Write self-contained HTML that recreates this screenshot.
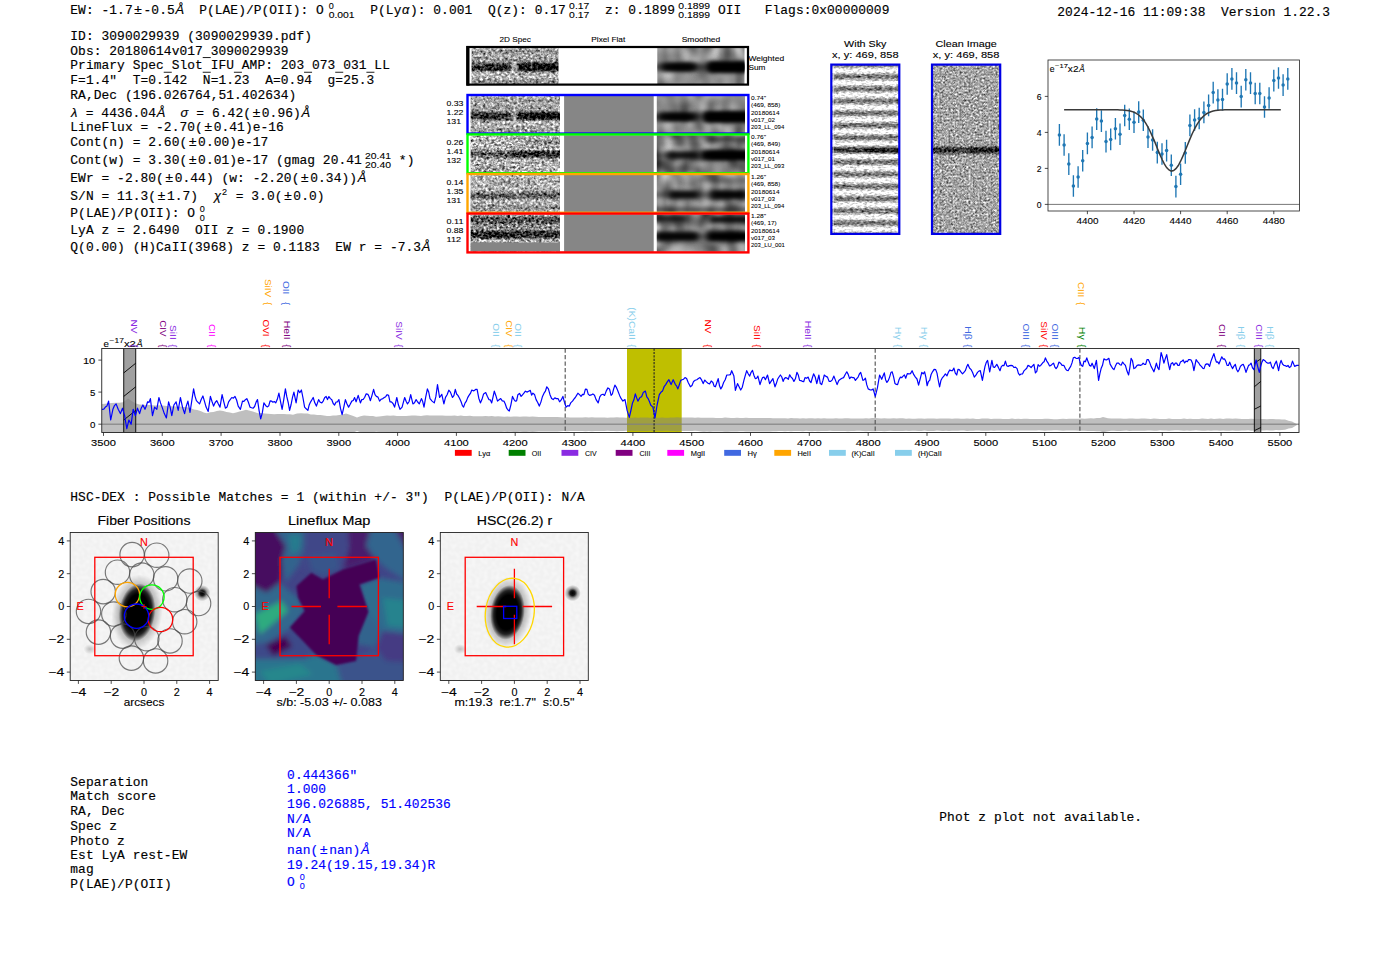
<!DOCTYPE html>
<html><head><meta charset="utf-8"><title>3090029939</title>
<style>
html,body{margin:0;padding:0;background:#fff;}
body{width:1400px;height:953px;overflow:hidden;}
svg{display:block}
text{white-space:pre}
.m{font-family:"Liberation Mono",monospace;font-size:12.9px;fill:#000;stroke:#000;stroke-width:0.16px}
.mi{font-family:"Liberation Sans",sans-serif;font-style:italic;font-size:12.9px;fill:#000;stroke:#000;stroke-width:0.16px}
.ss{font-family:"Liberation Sans",sans-serif;font-size:9.0px;fill:#000;stroke-width:0.15px}
.b{fill:#00f;stroke:#00f}
.s{font-family:"Liberation Sans",sans-serif}
</style></head>
<body>
<svg width="1400" height="953" viewBox="0 0 1400 953">
<rect width="1400" height="953" fill="#fff"/>
<!-- part_text -->
<text x="70.30" y="14.3" class="m"  textLength="62.36" lengthAdjust="spacing">EW: -1.7</text><text x="138.09" y="14.3" class="m" text-anchor="middle" style="font-family:'Liberation Sans',sans-serif;font-size:13.6px">±</text><text x="143.51" y="14.3" class="m"  textLength="31.18" lengthAdjust="spacing">-0.5</text><text x="179.72" y="14.3" class="mi" text-anchor="middle">Å</text><text x="199.14" y="14.3" class="m"  textLength="124.72" lengthAdjust="spacing">P(LAE)/P(OII): O</text><text x="328.66" y="8.7" class="s" font-size="9.07" stroke="#000" stroke-width="0.109" >0</text><text x="328.66" y="17.5" class="s" font-size="9.07" stroke="#000" stroke-width="0.109" textLength="25.97" lengthAdjust="spacingAndGlyphs" >0.001</text><text x="370.22" y="14.3" class="m"  textLength="31.18" lengthAdjust="spacing">P(Ly</text><text x="405.66" y="14.3" class="mi" text-anchor="middle">α</text><text x="409.93" y="14.3" class="m"  textLength="155.90" lengthAdjust="spacing">): 0.001  Q(z): 0.17</text><text x="569.13" y="8.7" class="s" font-size="9.07" stroke="#000" stroke-width="0.109" textLength="20.20" lengthAdjust="spacingAndGlyphs" >0.17</text><text x="569.13" y="17.5" class="s" font-size="9.07" stroke="#000" stroke-width="0.109" textLength="20.20" lengthAdjust="spacingAndGlyphs" >0.17</text><text x="604.92" y="14.3" class="m"  textLength="70.16" lengthAdjust="spacing">z: 0.1899</text><text x="678.37" y="8.7" class="s" font-size="9.07" stroke="#000" stroke-width="0.109" textLength="31.74" lengthAdjust="spacingAndGlyphs" >0.1899</text><text x="678.37" y="17.5" class="s" font-size="9.07" stroke="#000" stroke-width="0.109" textLength="31.74" lengthAdjust="spacingAndGlyphs" >0.1899</text><text x="717.91" y="14.3" class="m"  textLength="171.49" lengthAdjust="spacing">OII   Flags:0x00000009</text>
<text x="1057.3" y="16.4" class="m"  textLength="272.82" lengthAdjust="spacing">2024-12-16 11:09:38  Version 1.22.3</text>
<text x="70.3" y="40" class="m"  textLength="241.65" lengthAdjust="spacing">ID: 3090029939 (3090029939.pdf)</text>
<text x="70.3" y="54.6" class="m"  textLength="218.26" lengthAdjust="spacing">Obs: 20180614v017 3090029939</text><path d="M202.72 57.55h8.00" stroke="#111" stroke-width="0.95" fill="none"/>
<text x="70.3" y="69.3" class="m"  textLength="319.59" lengthAdjust="spacing">Primary Spec Slot IFU AMP: 203 073 031 LL</text><path d="M163.74 72.25h8.00M202.72 72.25h8.00M233.90 72.25h8.00M304.05 72.25h8.00M335.23 72.25h8.00M366.41 72.25h8.00" stroke="#111" stroke-width="0.95" fill="none"/>
<text x="70.3" y="84.2" class="m"  textLength="304.00" lengthAdjust="spacing">F=1.4"  T=0.142  N=1.23  A=0.94  g=25.3</text>
<text x="70.3" y="99.2" class="m"  textLength="226.06" lengthAdjust="spacing">RA,Dec (196.026764,51.402634)</text>
<text x="74.13" y="116.6" class="mi" text-anchor="middle">λ</text><text x="85.76" y="116.6" class="m"  textLength="70.16" lengthAdjust="spacing">= 4436.04</text><text x="160.94" y="116.6" class="mi" text-anchor="middle">Å</text><text x="184.47" y="116.6" class="mi" text-anchor="middle">σ</text><text x="196.37" y="116.6" class="m"  textLength="54.56" lengthAdjust="spacing">= 6.42(</text><text x="256.36" y="116.6" class="m" text-anchor="middle" style="font-family:'Liberation Sans',sans-serif;font-size:13.6px">±</text><text x="261.78" y="116.6" class="m"  textLength="38.98" lengthAdjust="spacing">0.96)</text><text x="305.79" y="116.6" class="mi" text-anchor="middle">Å</text>
<text x="70.30" y="131.4" class="m"  textLength="132.51" lengthAdjust="spacing">LineFlux = -2.70(</text><text x="208.24" y="131.4" class="m" text-anchor="middle" style="font-family:'Liberation Sans',sans-serif;font-size:13.6px">±</text><text x="213.67" y="131.4" class="m"  textLength="70.16" lengthAdjust="spacing">0.41)e-16</text>
<text x="70.30" y="146.3" class="m"  textLength="116.92" lengthAdjust="spacing">Cont(n) = 2.60(</text><text x="192.65" y="146.3" class="m" text-anchor="middle" style="font-family:'Liberation Sans',sans-serif;font-size:13.6px">±</text><text x="198.08" y="146.3" class="m"  textLength="70.16" lengthAdjust="spacing">0.00)e-17</text>
<text x="70.30" y="164.3" class="m"  textLength="116.92" lengthAdjust="spacing">Cont(w) = 3.30(</text><text x="192.65" y="164.3" class="m" text-anchor="middle" style="font-family:'Liberation Sans',sans-serif;font-size:13.6px">±</text><text x="198.08" y="164.3" class="m"  textLength="163.69" lengthAdjust="spacing">0.01)e-17 (gmag 20.41</text><text x="365.07" y="158.7" class="s" font-size="9.07" stroke="#000" stroke-width="0.109" textLength="25.97" lengthAdjust="spacingAndGlyphs" >20.41</text><text x="365.07" y="167.5" class="s" font-size="9.07" stroke="#000" stroke-width="0.109" textLength="25.97" lengthAdjust="spacingAndGlyphs" >20.40</text><text x="398.83" y="164.3" class="m"  textLength="15.59" lengthAdjust="spacing">*)</text>
<text x="70.30" y="182" class="m"  textLength="93.54" lengthAdjust="spacing">EWr = -2.80(</text><text x="169.27" y="182" class="m" text-anchor="middle" style="font-family:'Liberation Sans',sans-serif;font-size:13.6px">±</text><text x="174.69" y="182" class="m"  textLength="124.72" lengthAdjust="spacing">0.44) (w: -2.20(</text><text x="304.84" y="182" class="m" text-anchor="middle" style="font-family:'Liberation Sans',sans-serif;font-size:13.6px">±</text><text x="310.26" y="182" class="m"  textLength="46.77" lengthAdjust="spacing">0.34))</text><text x="362.06" y="182" class="mi" text-anchor="middle">Å</text>
<text x="70.30" y="200" class="m"  textLength="85.75" lengthAdjust="spacing">S/N = 11.3(</text><text x="161.47" y="200" class="m" text-anchor="middle" style="font-family:'Liberation Sans',sans-serif;font-size:13.6px">±</text><text x="166.90" y="200" class="m"  textLength="31.18" lengthAdjust="spacing">1.7)</text><text x="217.50" y="200" class="mi" text-anchor="middle">χ</text><text x="221.93" y="194.7" class="s" font-size="9.07" stroke="#000" stroke-width="0.109" >2</text><text x="235.70" y="200" class="m"  textLength="46.77" lengthAdjust="spacing">= 3.0(</text><text x="287.89" y="200" class="m" text-anchor="middle" style="font-family:'Liberation Sans',sans-serif;font-size:13.6px">±</text><text x="293.32" y="200" class="m"  textLength="31.18" lengthAdjust="spacing">0.0)</text>
<text x="70.30" y="217.3" class="m"  textLength="124.72" lengthAdjust="spacing">P(LAE)/P(OII): O</text><text x="199.82" y="211.7" class="s" font-size="9.07" stroke="#000" stroke-width="0.109" >0</text><text x="199.82" y="220.5" class="s" font-size="9.07" stroke="#000" stroke-width="0.109" >0</text>
<text x="70.3" y="234.3" class="m"  textLength="233.85" lengthAdjust="spacing">LyA z = 2.6490  OII z = 0.1900</text>
<text x="70.30" y="251.4" class="m"  textLength="350.77" lengthAdjust="spacing">Q(0.00) (H)CaII(3968) z = 0.1183  EW r = -7.3</text><text x="426.10" y="251.4" class="mi" text-anchor="middle">Å</text>
<text x="70.3" y="501" class="m"  textLength="514.47" lengthAdjust="spacing">HSC-DEX : Possible Matches = 1 (within +/- 3")  P(LAE)/P(OII): N/A</text>
<text x="70.3" y="785.7" class="m"  textLength="77.95" lengthAdjust="spacing">Separation</text>
<text x="70.3" y="800.3" class="m"  textLength="85.75" lengthAdjust="spacing">Match score</text>
<text x="70.3" y="815.1" class="m"  textLength="54.56" lengthAdjust="spacing">RA, Dec</text>
<text x="70.3" y="830" class="m"  textLength="46.77" lengthAdjust="spacing">Spec z</text>
<text x="70.3" y="844.6" class="m"  textLength="54.56" lengthAdjust="spacing">Photo z</text>
<text x="70.3" y="859.1" class="m"  textLength="116.92" lengthAdjust="spacing">Est LyA rest-EW</text>
<text x="70.3" y="872.9" class="m"  textLength="23.38" lengthAdjust="spacing">mag</text>
<text x="70.3" y="888" class="m"  textLength="101.33" lengthAdjust="spacing">P(LAE)/P(OII)</text>
<text x="287.1" y="778.6" class="m b"  textLength="70.16" lengthAdjust="spacing">0.444366"</text>
<text x="287.1" y="793.4" class="m b"  textLength="38.98" lengthAdjust="spacing">1.000</text>
<text x="287.1" y="808" class="m b"  textLength="163.69" lengthAdjust="spacing">196.026885, 51.402536</text>
<text x="287.1" y="822.6" class="m b"  textLength="23.38" lengthAdjust="spacing">N/A</text>
<text x="287.1" y="837.1" class="m b"  textLength="23.38" lengthAdjust="spacing">N/A</text>
<text x="287.10" y="853.7" class="m b"  textLength="31.18" lengthAdjust="spacing">nan(</text><text x="323.71" y="853.7" class="m b" text-anchor="middle" style="font-family:'Liberation Sans',sans-serif;font-size:13.6px">±</text><text x="329.13" y="853.7" class="m b"  textLength="31.18" lengthAdjust="spacing">nan)</text><text x="365.34" y="853.7" class="mi b" text-anchor="middle">Å</text>
<text x="287.1" y="869.4" class="m b"  textLength="148.10" lengthAdjust="spacing">19.24(19.15,19.34)R</text>
<text x="287.10" y="885.7" class="m b" >O</text><text x="299.70" y="880.1" class="s" font-size="9.07" fill="#0000ff" stroke="#0000ff" stroke-width="0.109" >0</text><text x="299.70" y="888.9" class="s" font-size="9.07" fill="#0000ff" stroke="#0000ff" stroke-width="0.109" >0</text>
<text x="939.3" y="821" class="m"  textLength="202.67" lengthAdjust="spacing">Phot z plot not available.</text>
<!-- part_cutouts -->

<defs>
<filter id="nz" x="0" y="0" width="100%" height="100%" color-interpolation-filters="sRGB">
  <feTurbulence type="fractalNoise" baseFrequency="0.33 0.4" numOctaves="2" seed="7"/>
  <feColorMatrix type="matrix" values="0.95 0.95 0 0 -0.28  0.95 0.95 0 0 -0.28  0.95 0.95 0 0 -0.28  0 0 0 0 1"/>
</filter>
<filter id="nz2" x="0" y="0" width="100%" height="100%" color-interpolation-filters="sRGB">
  <feTurbulence type="fractalNoise" baseFrequency="0.35 0.42" numOctaves="2" seed="23"/>
  <feColorMatrix type="matrix" values="1.05 1.05 0 0 -0.42  1.05 1.05 0 0 -0.42  1.05 1.05 0 0 -0.42  0 0 0 0 1"/>
</filter>
<filter id="tex" x="0" y="0" width="100%" height="100%" color-interpolation-filters="sRGB">
  <feTurbulence type="fractalNoise" baseFrequency="0.36 0.42" numOctaves="2" seed="7"/>
  <feColorMatrix type="matrix" values="0.5 0.5 0 0 0  0.5 0.5 0 0 0  0.5 0.5 0 0 0  0 0 0 0 1" result="n"/>
  <feComposite in="SourceGraphic" in2="n" operator="arithmetic" k1="0" k2="1" k3="1.8" k4="-0.9"/>
</filter>
<filter id="tex2" x="0" y="0" width="100%" height="100%" color-interpolation-filters="sRGB">
  <feTurbulence type="fractalNoise" baseFrequency="0.38 0.45" numOctaves="2" seed="31"/>
  <feColorMatrix type="matrix" values="0.5 0.5 0 0 0  0.5 0.5 0 0 0  0.5 0.5 0 0 0  0 0 0 0 1" result="n"/>
  <feComposite in="SourceGraphic" in2="n" operator="arithmetic" k1="0" k2="1" k3="2.0" k4="-1.0"/>
</filter>
<filter id="sm" x="0" y="0" width="100%" height="100%" color-interpolation-filters="sRGB">
  <feTurbulence type="fractalNoise" baseFrequency="0.09 0.06" numOctaves="1" seed="4"/>
  <feColorMatrix type="matrix" values="0.55 0.55 0 0 0.0  0.55 0.55 0 0 0.0  0.55 0.55 0 0 0.0  0 0 0 0 1"/>
</filter>
<filter id="sm2" x="0" y="0" width="100%" height="100%" color-interpolation-filters="sRGB">
  <feTurbulence type="fractalNoise" baseFrequency="0.08 0.07" numOctaves="1" seed="19"/>
  <feColorMatrix type="matrix" values="0.6 0.6 0 0 -0.1  0.6 0.6 0 0 -0.1  0.6 0.6 0 0 -0.1  0 0 0 0 1"/>
</filter>
<filter id="bl1" x="-30%" y="-200%" width="160%" height="500%"><feGaussianBlur stdDeviation="3 2.1"/></filter>
<filter id="bl2" x="-30%" y="-200%" width="160%" height="500%"><feGaussianBlur stdDeviation="1.2 1.3"/></filter>
</defs>
<text x="515.2" y="41.8" class="s" font-size="7.55" text-anchor="middle" stroke="#000" stroke-width="0.091" textLength="31.40" lengthAdjust="spacingAndGlyphs" >2D Spec</text>
<text x="608.3" y="41.8" class="s" font-size="7.55" text-anchor="middle" stroke="#000" stroke-width="0.091" textLength="33.89" lengthAdjust="spacingAndGlyphs" >Pixel Flat</text>
<text x="701" y="41.8" class="s" font-size="7.55" text-anchor="middle" stroke="#000" stroke-width="0.091" textLength="38.57" lengthAdjust="spacingAndGlyphs" >Smoothed</text>
<text x="748.4" y="60.8" class="s" font-size="7.55" stroke="#000" stroke-width="0.091" textLength="35.74" lengthAdjust="spacingAndGlyphs" >Weighted</text>
<text x="748.4" y="69.6" class="s" font-size="7.55" stroke="#000" stroke-width="0.091" textLength="16.93" lengthAdjust="spacingAndGlyphs" >Sum</text>
<clipPath id="c0"><rect x="471.5" y="47.5" width="87" height="36.599999999999994"/></clipPath><g clip-path="url(#c0)"><g filter="url(#tex)"><rect x="465.5" y="41.5" width="99" height="48.599999999999994" fill="#b4b4b4"/><rect x="468.5" y="63.0" width="43" height="8" fill="#000" opacity="0.7" filter="url(#bl2)"/><rect x="485.5" y="65.0" width="20" height="5" fill="#000" opacity="0.5" filter="url(#bl2)"/><rect x="517.5" y="62.5" width="44" height="9" fill="#000" opacity="0.85" filter="url(#bl2)"/><rect x="521.5" y="64.5" width="40" height="5" fill="#000" opacity="0.7" filter="url(#bl2)"/><rect x="468.5" y="51.0" width="93" height="3" fill="#000" opacity="0.25" filter="url(#bl2)"/><rect x="468.5" y="80.0" width="93" height="3" fill="#000" opacity="0.25" filter="url(#bl2)"/><rect x="468.5" y="57.0" width="93" height="5" fill="#000" opacity="0.15" filter="url(#bl2)"/></g></g>
<clipPath id="c0s"><rect x="657.3" y="47.5" width="87.2" height="36.599999999999994"/></clipPath><g clip-path="url(#c0s)"><rect x="657.3" y="47.5" width="87.2" height="36.599999999999994" fill="#999" filter="url(#sm)"/><rect x="661.3" y="63.0" width="36" height="8" fill="#000" opacity="0.95" filter="url(#bl1)"/><rect x="669.3" y="64.5" width="22" height="5" fill="#000" opacity="0.8" filter="url(#bl1)"/><rect x="707.3" y="61.5" width="42" height="11" fill="#000" opacity="1" filter="url(#bl1)"/><rect x="709.3" y="63.5" width="40" height="7" fill="#000" opacity="1" filter="url(#bl1)"/><rect x="652.3" y="63.5" width="100" height="7" fill="#000" opacity="0.5" filter="url(#bl1)"/></g>
<rect x="467.4" y="47.0" width="280.6" height="37.599999999999994" fill="none" stroke="#000" stroke-width="2.2"/>
<rect x="466.3" y="46.0" width="3.2" height="39.599999999999994" fill="#000"/>
<clipPath id="c1"><rect x="470.6" y="95.8" width="89.4" height="37.2"/></clipPath><g clip-path="url(#c1)"><g filter="url(#tex)"><rect x="464.6" y="89.8" width="101.4" height="49.2" fill="#b4b4b4"/><rect x="467.6" y="111.8" width="45" height="8" fill="#000" opacity="0.65" filter="url(#bl2)"/><rect x="480.6" y="114.3" width="20" height="5" fill="#000" opacity="0.5" filter="url(#bl2)"/><rect x="516.6" y="111.8" width="47" height="8" fill="#000" opacity="0.85" filter="url(#bl2)"/><rect x="522.6" y="113.3" width="41" height="5" fill="#000" opacity="0.7" filter="url(#bl2)"/><rect x="467.6" y="99.3" width="96" height="3" fill="#000" opacity="0.2" filter="url(#bl2)"/><rect x="467.6" y="128.3" width="96" height="3" fill="#000" opacity="0.2" filter="url(#bl2)"/><rect x="467.6" y="105.3" width="96" height="5" fill="#000" opacity="0.15" filter="url(#bl2)"/></g></g>
<rect x="564.1" y="95.8" width="89.6" height="37.2" fill="#868686"/>
<clipPath id="c1s"><rect x="656.8" y="95.8" width="88.2" height="37.2"/></clipPath><g clip-path="url(#c1s)"><rect x="656.8" y="95.8" width="88.2" height="37.2" fill="#999" filter="url(#sm)"/><rect x="658.8" y="112.8" width="38" height="8" fill="#000" opacity="0.95" filter="url(#bl1)"/><rect x="666.8" y="114.3" width="24" height="5" fill="#000" opacity="0.8" filter="url(#bl1)"/><rect x="702.8" y="111.3" width="49" height="11" fill="#000" opacity="1" filter="url(#bl1)"/><rect x="706.8" y="113.3" width="45" height="7" fill="#000" opacity="1" filter="url(#bl1)"/><rect x="651.8" y="113.3" width="100" height="7" fill="#000" opacity="0.5" filter="url(#bl1)"/></g>
<text x="446.5" y="105.6" class="s" font-size="7.6" stroke="#000" stroke-width="0.091" textLength="16.92" lengthAdjust="spacingAndGlyphs" >0.33</text>
<text x="446.5" y="114.6" class="s" font-size="7.6" stroke="#000" stroke-width="0.091" textLength="16.92" lengthAdjust="spacingAndGlyphs" >1.22</text>
<text x="446.5" y="123.6" class="s" font-size="7.6" stroke="#000" stroke-width="0.091" textLength="14.51" lengthAdjust="spacingAndGlyphs" >131</text>
<text x="751.0" y="99.7" class="s" font-size="5.6" stroke="#000" stroke-width="0.067" textLength="15.05" lengthAdjust="spacingAndGlyphs" >0.74"</text>
<text x="751.0" y="106.8" class="s" font-size="5.6" stroke="#000" stroke-width="0.067" textLength="29.31" lengthAdjust="spacingAndGlyphs" >(469, 858)</text>
<text x="751.0" y="114.8" class="s" font-size="5.6" stroke="#000" stroke-width="0.067" textLength="28.50" lengthAdjust="spacingAndGlyphs" >20180614</text>
<text x="751.0" y="121.6" class="s" font-size="5.6" stroke="#000" stroke-width="0.067" textLength="23.93" lengthAdjust="spacingAndGlyphs" >v017_02</text>
<text x="751.0" y="128.7" class="s" font-size="5.6" stroke="#000" stroke-width="0.067" textLength="33.22" lengthAdjust="spacingAndGlyphs" >203_LL_094</text>
<clipPath id="c2"><rect x="470.6" y="135.20000000000002" width="89.4" height="37.39999999999999"/></clipPath><g clip-path="url(#c2)"><g filter="url(#tex2)"><rect x="464.6" y="129.20000000000002" width="101.4" height="49.39999999999999" fill="#b4b4b4"/><rect x="467.6" y="150.70000000000002" width="96" height="7" fill="#000" opacity="0.5" filter="url(#bl2)"/><rect x="510.6" y="151.20000000000002" width="53" height="6" fill="#000" opacity="0.6" filter="url(#bl2)"/><rect x="525.6" y="140.20000000000002" width="38" height="4" fill="#000" opacity="0.3" filter="url(#bl2)"/><rect x="475.6" y="166.70000000000002" width="35" height="3" fill="#000" opacity="0.25" filter="url(#bl2)"/></g></g>
<rect x="564.1" y="135.20000000000002" width="89.6" height="37.39999999999999" fill="#868686"/>
<clipPath id="c2s"><rect x="656.8" y="135.20000000000002" width="88.2" height="37.39999999999999"/></clipPath><g clip-path="url(#c2s)"><rect x="656.8" y="135.20000000000002" width="88.2" height="37.39999999999999" fill="#999" filter="url(#sm2)"/><rect x="666.8" y="151.70000000000002" width="32" height="7" fill="#000" opacity="0.85" filter="url(#bl1)"/><rect x="700.8" y="150.20000000000002" width="51" height="10" fill="#000" opacity="1" filter="url(#bl1)"/><rect x="708.8" y="152.20000000000002" width="43" height="6" fill="#000" opacity="0.9" filter="url(#bl1)"/><rect x="704.8" y="136.20000000000002" width="47" height="6" fill="#000" opacity="0.55" filter="url(#bl1)"/><rect x="651.8" y="152.20000000000002" width="100" height="6" fill="#000" opacity="0.4" filter="url(#bl1)"/><rect x="661.8" y="166.70000000000002" width="40" height="5" fill="#000" opacity="0.35" filter="url(#bl1)"/></g>
<text x="446.5" y="145.0" class="s" font-size="7.6" stroke="#000" stroke-width="0.091" textLength="16.92" lengthAdjust="spacingAndGlyphs" >0.26</text>
<text x="446.5" y="154.0" class="s" font-size="7.6" stroke="#000" stroke-width="0.091" textLength="16.92" lengthAdjust="spacingAndGlyphs" >1.41</text>
<text x="446.5" y="163.0" class="s" font-size="7.6" stroke="#000" stroke-width="0.091" textLength="14.51" lengthAdjust="spacingAndGlyphs" >132</text>
<text x="751.0" y="139.1" class="s" font-size="5.6" stroke="#000" stroke-width="0.067" textLength="15.05" lengthAdjust="spacingAndGlyphs" >0.76"</text>
<text x="751.0" y="146.2" class="s" font-size="5.6" stroke="#000" stroke-width="0.067" textLength="29.31" lengthAdjust="spacingAndGlyphs" >(469, 849)</text>
<text x="751.0" y="154.2" class="s" font-size="5.6" stroke="#000" stroke-width="0.067" textLength="28.50" lengthAdjust="spacingAndGlyphs" >20180614</text>
<text x="751.0" y="161.0" class="s" font-size="5.6" stroke="#000" stroke-width="0.067" textLength="23.93" lengthAdjust="spacingAndGlyphs" >v017_01</text>
<text x="751.0" y="168.1" class="s" font-size="5.6" stroke="#000" stroke-width="0.067" textLength="33.22" lengthAdjust="spacingAndGlyphs" >203_LL_093</text>
<clipPath id="c3"><rect x="470.6" y="174.8" width="89.4" height="37.39999999999999"/></clipPath><g clip-path="url(#c3)"><g filter="url(#tex)"><rect x="464.6" y="168.8" width="101.4" height="49.39999999999999" fill="#b4b4b4"/><rect x="467.6" y="192.8" width="48" height="6" fill="#000" opacity="0.55" filter="url(#bl2)"/><rect x="518.6" y="192.3" width="45" height="6" fill="#000" opacity="0.55" filter="url(#bl2)"/><rect x="467.6" y="206.3" width="96" height="3" fill="#000" opacity="0.3" filter="url(#bl2)"/><rect x="490.6" y="180.8" width="40" height="4" fill="#000" opacity="0.15" filter="url(#bl2)"/></g></g>
<rect x="564.1" y="174.8" width="89.6" height="37.39999999999999" fill="#868686"/>
<clipPath id="c3s"><rect x="656.8" y="174.8" width="88.2" height="37.39999999999999"/></clipPath><g clip-path="url(#c3s)"><rect x="656.8" y="174.8" width="88.2" height="37.39999999999999" fill="#999" filter="url(#sm)"/><rect x="668.8" y="190.8" width="30" height="8" fill="#000" opacity="0.9" filter="url(#bl1)"/><rect x="710.8" y="190.3" width="36" height="9" fill="#000" opacity="0.95" filter="url(#bl1)"/><rect x="651.8" y="191.8" width="100" height="6" fill="#000" opacity="0.4" filter="url(#bl1)"/><rect x="651.8" y="207.3" width="100" height="5" fill="#000" opacity="0.55" filter="url(#bl1)"/><rect x="696.8" y="177.3" width="55" height="5" fill="#000" opacity="0.3" filter="url(#bl1)"/></g>
<text x="446.5" y="184.6" class="s" font-size="7.6" stroke="#000" stroke-width="0.091" textLength="16.92" lengthAdjust="spacingAndGlyphs" >0.14</text>
<text x="446.5" y="193.6" class="s" font-size="7.6" stroke="#000" stroke-width="0.091" textLength="16.92" lengthAdjust="spacingAndGlyphs" >1.35</text>
<text x="446.5" y="202.6" class="s" font-size="7.6" stroke="#000" stroke-width="0.091" textLength="14.51" lengthAdjust="spacingAndGlyphs" >131</text>
<text x="751.0" y="178.7" class="s" font-size="5.6" stroke="#000" stroke-width="0.067" textLength="15.05" lengthAdjust="spacingAndGlyphs" >1.26"</text>
<text x="751.0" y="185.8" class="s" font-size="5.6" stroke="#000" stroke-width="0.067" textLength="29.31" lengthAdjust="spacingAndGlyphs" >(469, 858)</text>
<text x="751.0" y="193.8" class="s" font-size="5.6" stroke="#000" stroke-width="0.067" textLength="28.50" lengthAdjust="spacingAndGlyphs" >20180614</text>
<text x="751.0" y="200.6" class="s" font-size="5.6" stroke="#000" stroke-width="0.067" textLength="23.93" lengthAdjust="spacingAndGlyphs" >v017_03</text>
<text x="751.0" y="207.7" class="s" font-size="5.6" stroke="#000" stroke-width="0.067" textLength="33.22" lengthAdjust="spacingAndGlyphs" >203_LL_094</text>
<clipPath id="c4"><rect x="470.6" y="214.4" width="89.4" height="37.39999999999999"/></clipPath><g clip-path="url(#c4)"><g filter="url(#tex2)"><rect x="464.6" y="208.4" width="101.4" height="49.39999999999999" fill="#b4b4b4"/><rect x="467.6" y="216.4" width="96" height="8" fill="#000" opacity="0.55" filter="url(#bl2)"/><rect x="467.6" y="230.4" width="96" height="8" fill="#000" opacity="0.75" filter="url(#bl2)"/><rect x="480.6" y="232.9" width="40" height="5" fill="#000" opacity="0.4" filter="url(#bl2)"/><rect x="467.6" y="225.9" width="96" height="3" fill="#000" opacity="0.25" filter="url(#bl2)"/></g></g>
<rect x="470.6" y="242.39999999999998" width="89.4" height="8.6" fill="#858585"/>
<rect x="564.1" y="214.4" width="89.6" height="37.39999999999999" fill="#868686"/>
<clipPath id="c4s"><rect x="656.8" y="214.4" width="88.2" height="37.39999999999999"/></clipPath><g clip-path="url(#c4s)"><rect x="656.8" y="214.4" width="88.2" height="37.39999999999999" fill="#999" filter="url(#sm2)"/><rect x="654.8" y="231.9" width="44" height="9" fill="#000" opacity="0.95" filter="url(#bl1)"/><rect x="706.8" y="231.4" width="45" height="10" fill="#000" opacity="1" filter="url(#bl1)"/><rect x="651.8" y="214.9" width="35" height="7" fill="#000" opacity="0.75" filter="url(#bl1)"/><rect x="708.8" y="215.4" width="43" height="8" fill="#000" opacity="0.9" filter="url(#bl1)"/><rect x="651.8" y="233.4" width="100" height="6" fill="#000" opacity="0.45" filter="url(#bl1)"/></g>
<text x="446.5" y="224.2" class="s" font-size="7.6" stroke="#000" stroke-width="0.091" textLength="16.92" lengthAdjust="spacingAndGlyphs" >0.11</text>
<text x="446.5" y="233.2" class="s" font-size="7.6" stroke="#000" stroke-width="0.091" textLength="16.92" lengthAdjust="spacingAndGlyphs" >0.88</text>
<text x="446.5" y="242.2" class="s" font-size="7.6" stroke="#000" stroke-width="0.091" textLength="14.51" lengthAdjust="spacingAndGlyphs" >112</text>
<text x="751.0" y="218.3" class="s" font-size="5.6" stroke="#000" stroke-width="0.067" textLength="15.05" lengthAdjust="spacingAndGlyphs" >1.28"</text>
<text x="751.0" y="225.4" class="s" font-size="5.6" stroke="#000" stroke-width="0.067" textLength="25.75" lengthAdjust="spacingAndGlyphs" >(469, 17)</text>
<text x="751.0" y="233.4" class="s" font-size="5.6" stroke="#000" stroke-width="0.067" textLength="28.50" lengthAdjust="spacingAndGlyphs" >20180614</text>
<text x="751.0" y="240.2" class="s" font-size="5.6" stroke="#000" stroke-width="0.067" textLength="23.93" lengthAdjust="spacingAndGlyphs" >v017_03</text>
<text x="751.0" y="247.3" class="s" font-size="5.6" stroke="#000" stroke-width="0.067" textLength="33.92" lengthAdjust="spacingAndGlyphs" >203_LU_001</text>
<rect x="467.5" y="95.0" width="280.9" height="38.6" fill="none" stroke="#0000ff" stroke-width="2.4"/>
<rect x="467.5" y="134.4" width="280.9" height="38.8" fill="none" stroke="#00ff00" stroke-width="2.4"/>
<rect x="467.5" y="174.0" width="280.9" height="38.8" fill="none" stroke="#ffa500" stroke-width="2.4"/>
<rect x="467.5" y="213.6" width="280.9" height="38.8" fill="none" stroke="#ff0000" stroke-width="2.4"/>
<!-- part_sky -->
<defs>
<filter id="nzc" x="0" y="0" width="100%" height="100%" color-interpolation-filters="sRGB">
  <feTurbulence type="fractalNoise" baseFrequency="0.45 0.5" numOctaves="2" seed="11"/>
  <feColorMatrix type="matrix" values="0.5 0.5 0 0 0  0.5 0.5 0 0 0  0.5 0.5 0 0 0  0 0 0 0 1" result="n"/>
  <feComposite in="SourceGraphic" in2="n" operator="arithmetic" k1="0" k2="1" k3="1.5" k4="-0.75"/>
</filter>
<filter id="nzs" x="0" y="0" width="100%" height="100%" color-interpolation-filters="sRGB">
  <feTurbulence type="fractalNoise" baseFrequency="0.28 0.55" numOctaves="2" seed="5"/>
  <feColorMatrix type="matrix" values="0.5 0.5 0 0 0  0.5 0.5 0 0 0  0.5 0.5 0 0 0  0 0 0 0 1" result="n"/>
  <feComposite in="SourceGraphic" in2="n" operator="arithmetic" k1="0" k2="1" k3="1.3" k4="-0.62"/>
</filter>
<linearGradient id="skyg" x1="0" y1="0" x2="0" y2="12.2" gradientUnits="userSpaceOnUse" spreadMethod="repeat" gradientTransform="translate(0,70.6)">
  <stop offset="0" stop-color="#ffffff"/><stop offset="0.125" stop-color="#ececec"/><stop offset="0.25" stop-color="#b8b8b8"/><stop offset="0.375" stop-color="#7c7c7c"/><stop offset="0.5" stop-color="#626262"/><stop offset="0.625" stop-color="#7c7c7c"/><stop offset="0.75" stop-color="#b8b8b8"/><stop offset="0.875" stop-color="#ececec"/><stop offset="1" stop-color="#ffffff"/>
</linearGradient>
<filter id="bl3" x="-30%" y="-200%" width="160%" height="500%"><feGaussianBlur stdDeviation="1.2 1.1"/></filter>
</defs>
<text x="865.3" y="47.3" class="s" font-size="9.72" text-anchor="middle" stroke="#000" stroke-width="0.117" textLength="42.36" lengthAdjust="spacingAndGlyphs" >With Sky</text>
<text x="865.3" y="58.3" class="s" font-size="9.72" text-anchor="middle" stroke="#000" stroke-width="0.117" textLength="66.63" lengthAdjust="spacingAndGlyphs" >x, y: 469, 858</text>
<text x="966.1" y="47.3" class="s" font-size="9.72" text-anchor="middle" stroke="#000" stroke-width="0.117" textLength="61.12" lengthAdjust="spacingAndGlyphs" >Clean Image</text>
<text x="966.1" y="58.3" class="s" font-size="9.72" text-anchor="middle" stroke="#000" stroke-width="0.117" textLength="66.63" lengthAdjust="spacingAndGlyphs" >x, y: 469, 858</text>
<clipPath id="cs"><rect x="831.2" y="64.5" width="68.19999999999993" height="169.5"/></clipPath>
<g clip-path="url(#cs)"><g filter="url(#nzs)"><rect x="826.2" y="59.5" width="78.19999999999993" height="179.5" fill="url(#skyg)"/>
<rect x="830.2" y="147.2" width="72" height="6" fill="#000" opacity="0.55" filter="url(#bl3)"/><rect x="866.2" y="147.6" width="36" height="5" fill="#000" opacity="0.5" filter="url(#bl3)"/></g><rect x="832.4000000000001" y="64.5" width="1.6" height="169.5" fill="#fff" opacity="0.5"/></g>
<rect x="831.3000000000001" y="64.6" width="67.99999999999993" height="169.3" fill="none" stroke="#0000e6" stroke-width="2.2"/>
<clipPath id="cc"><rect x="931.9" y="64.5" width="68.39999999999998" height="169.5"/></clipPath>
<g clip-path="url(#cc)"><g filter="url(#nzc)"><rect x="926.9" y="59.5" width="78.39999999999998" height="179.5" fill="#a4a4a4"/><rect x="930.9" y="147.0" width="72" height="6.4" fill="#000" opacity="0.6" filter="url(#bl3)"/><rect x="968.9" y="147.4" width="36" height="5.4" fill="#000" opacity="0.6" filter="url(#bl3)"/><rect x="934.9" y="147.4" width="24" height="5.4" fill="#000" opacity="0.35" filter="url(#bl3)"/></g></g>
<rect x="932.0" y="64.6" width="68.19999999999997" height="169.3" fill="none" stroke="#0000e6" stroke-width="2.2"/>
<!-- part_fit -->
<line x1="1048.0" x2="1299.4" y1="204.4" y2="204.4" stroke="#555" stroke-width="0.8"/>
<path d="M1059.4 124.1V145.7M1064.1 134.2V155.8M1068.8 153.3V174.9M1073.4 175.2V196.8M1078.1 166.2V187.8M1082.7 149.9V171.5M1087.4 132.6V154.2M1092.1 126.6V148.2M1096.7 108.3V129.9M1101.4 110.3V131.9M1106.0 130.8V152.4M1110.7 128.6V150.2M1115.4 118.0V139.6M1120.0 123.4V145.0M1124.7 104.7V126.3M1129.3 108.5V130.1M1134.0 111.5V133.1M1138.7 101.3V122.9M1143.3 109.5V131.1M1148.0 126.3V147.9M1152.6 129.2V150.8M1157.3 141.8V163.4M1162.0 143.2V164.8M1166.6 139.8V161.4M1171.3 154.5V176.1M1175.9 175.8V197.4M1180.6 163.5V185.1M1185.3 142.1V163.7M1189.9 114.6V136.2M1194.6 109.2V130.8M1199.2 107.7V129.3M1203.9 101.6V123.2M1208.6 94.6V116.2M1213.2 81.8V103.4M1217.9 89.2V110.8M1222.5 88.8V110.4M1227.2 73.2V94.8M1231.9 68.1V89.7M1236.5 72.3V93.9M1241.2 85.8V107.4M1245.8 68.9V90.5M1250.5 72.3V93.9M1255.2 82.7V104.3M1259.8 82.7V104.3M1264.5 96.2V117.8M1269.1 87.2V108.8M1273.8 69.8V91.4M1278.5 67.2V88.8M1283.1 74.3V95.9M1287.8 68.1V89.7" stroke="#1f77b4" stroke-width="1.35" fill="none"/>
<g fill="#1f77b4"><circle cx="1059.4" cy="134.9" r="1.75"/><circle cx="1064.1" cy="145.0" r="1.75"/><circle cx="1068.8" cy="164.1" r="1.75"/><circle cx="1073.4" cy="186.0" r="1.75"/><circle cx="1078.1" cy="177.0" r="1.75"/><circle cx="1082.7" cy="160.7" r="1.75"/><circle cx="1087.4" cy="143.4" r="1.75"/><circle cx="1092.1" cy="137.4" r="1.75"/><circle cx="1096.7" cy="119.1" r="1.75"/><circle cx="1101.4" cy="121.1" r="1.75"/><circle cx="1106.0" cy="141.6" r="1.75"/><circle cx="1110.7" cy="139.4" r="1.75"/><circle cx="1115.4" cy="128.8" r="1.75"/><circle cx="1120.0" cy="134.2" r="1.75"/><circle cx="1124.7" cy="115.5" r="1.75"/><circle cx="1129.3" cy="119.3" r="1.75"/><circle cx="1134.0" cy="122.3" r="1.75"/><circle cx="1138.7" cy="112.1" r="1.75"/><circle cx="1143.3" cy="120.3" r="1.75"/><circle cx="1148.0" cy="137.1" r="1.75"/><circle cx="1152.6" cy="140.0" r="1.75"/><circle cx="1157.3" cy="152.6" r="1.75"/><circle cx="1162.0" cy="154.0" r="1.75"/><circle cx="1166.6" cy="150.6" r="1.75"/><circle cx="1171.3" cy="165.3" r="1.75"/><circle cx="1175.9" cy="186.6" r="1.75"/><circle cx="1180.6" cy="174.3" r="1.75"/><circle cx="1185.3" cy="152.9" r="1.75"/><circle cx="1189.9" cy="125.4" r="1.75"/><circle cx="1194.6" cy="120.0" r="1.75"/><circle cx="1199.2" cy="118.5" r="1.75"/><circle cx="1203.9" cy="112.4" r="1.75"/><circle cx="1208.6" cy="105.4" r="1.75"/><circle cx="1213.2" cy="92.6" r="1.75"/><circle cx="1217.9" cy="100.0" r="1.75"/><circle cx="1222.5" cy="99.6" r="1.75"/><circle cx="1227.2" cy="84.0" r="1.75"/><circle cx="1231.9" cy="78.9" r="1.75"/><circle cx="1236.5" cy="83.1" r="1.75"/><circle cx="1241.2" cy="96.6" r="1.75"/><circle cx="1245.8" cy="79.7" r="1.75"/><circle cx="1250.5" cy="83.1" r="1.75"/><circle cx="1255.2" cy="93.5" r="1.75"/><circle cx="1259.8" cy="93.5" r="1.75"/><circle cx="1264.5" cy="107.0" r="1.75"/><circle cx="1269.1" cy="98.0" r="1.75"/><circle cx="1273.8" cy="80.6" r="1.75"/><circle cx="1278.5" cy="78.0" r="1.75"/><circle cx="1283.1" cy="85.1" r="1.75"/><circle cx="1287.8" cy="78.9" r="1.75"/></g>
<polyline points="1064.1,109.7 1066.4,109.7 1068.8,109.7 1071.1,109.7 1073.4,109.7 1075.8,109.7 1078.1,109.7 1080.4,109.7 1082.7,109.7 1085.1,109.7 1087.4,109.7 1089.7,109.7 1092.1,109.7 1094.4,109.7 1096.7,109.7 1099.1,109.7 1101.4,109.7 1103.7,109.7 1106.0,109.7 1108.4,109.7 1110.7,109.7 1113.0,109.7 1115.4,109.8 1117.7,109.8 1120.0,109.9 1122.4,110.0 1124.7,110.2 1127.0,110.4 1129.3,110.8 1131.7,111.4 1134.0,112.3 1136.3,113.4 1138.7,115.0 1141.0,117.1 1143.3,119.8 1145.7,123.1 1148.0,127.1 1150.3,131.7 1152.6,136.9 1155.0,142.4 1157.3,148.2 1159.6,153.9 1162.0,159.3 1164.3,163.9 1166.6,167.6 1169.0,170.0 1171.3,171.1 1173.6,170.6 1175.9,168.7 1178.3,165.5 1180.6,161.2 1182.9,156.1 1185.3,150.5 1187.6,144.7 1189.9,139.1 1192.2,133.7 1194.6,128.9 1196.9,124.6 1199.2,121.1 1201.6,118.1 1203.9,115.8 1206.2,114.0 1208.6,112.7 1210.9,111.7 1213.2,111.0 1215.6,110.6 1217.9,110.2 1220.2,110.0 1222.5,109.9 1224.9,109.8 1227.2,109.8 1229.5,109.8 1231.9,109.7 1234.2,109.7 1236.5,109.7 1238.9,109.7 1241.2,109.7 1243.5,109.7 1245.8,109.7 1248.2,109.7 1250.5,109.7 1252.8,109.7 1255.2,109.7 1257.5,109.7 1259.8,109.7 1262.2,109.7 1264.5,109.7 1266.8,109.7 1269.1,109.7 1271.5,109.7 1273.8,109.7 1276.1,109.7 1278.5,109.7 1280.8,109.7" fill="none" stroke="#3a3a3a" stroke-width="1.5"/>
<rect x="1048.0" y="60.0" width="251.4000000000001" height="151.0" fill="none" stroke="#222" stroke-width="0.8"/>
<line x1="1087.4" x2="1087.4" y1="211.0" y2="214.2" stroke="#222" stroke-width="0.8"/>
<text x="1087.4" y="223.8" class="s" font-size="8.64" text-anchor="middle" stroke="#000" stroke-width="0.104" textLength="21.99" lengthAdjust="spacingAndGlyphs" >4400</text>
<line x1="1134.0" x2="1134.0" y1="211.0" y2="214.2" stroke="#222" stroke-width="0.8"/>
<text x="1134.0" y="223.8" class="s" font-size="8.64" text-anchor="middle" stroke="#000" stroke-width="0.104" textLength="21.99" lengthAdjust="spacingAndGlyphs" >4420</text>
<line x1="1180.6" x2="1180.6" y1="211.0" y2="214.2" stroke="#222" stroke-width="0.8"/>
<text x="1180.6" y="223.8" class="s" font-size="8.64" text-anchor="middle" stroke="#000" stroke-width="0.104" textLength="21.99" lengthAdjust="spacingAndGlyphs" >4440</text>
<line x1="1227.2" x2="1227.2" y1="211.0" y2="214.2" stroke="#222" stroke-width="0.8"/>
<text x="1227.2" y="223.8" class="s" font-size="8.64" text-anchor="middle" stroke="#000" stroke-width="0.104" textLength="21.99" lengthAdjust="spacingAndGlyphs" >4460</text>
<line x1="1273.8" x2="1273.8" y1="211.0" y2="214.2" stroke="#222" stroke-width="0.8"/>
<text x="1273.8" y="223.8" class="s" font-size="8.64" text-anchor="middle" stroke="#000" stroke-width="0.104" textLength="21.99" lengthAdjust="spacingAndGlyphs" >4480</text>
<line x1="1044.8" x2="1048.0" y1="204.4" y2="204.4" stroke="#222" stroke-width="0.8"/>
<text x="1041.6" y="207.6" class="s" font-size="8.64" text-anchor="end" stroke="#000" stroke-width="0.104" >0</text>
<line x1="1044.8" x2="1048.0" y1="168.4" y2="168.4" stroke="#222" stroke-width="0.8"/>
<text x="1041.6" y="171.6" class="s" font-size="8.64" text-anchor="end" stroke="#000" stroke-width="0.104" >2</text>
<line x1="1044.8" x2="1048.0" y1="132.4" y2="132.4" stroke="#222" stroke-width="0.8"/>
<text x="1041.6" y="135.6" class="s" font-size="8.64" text-anchor="end" stroke="#000" stroke-width="0.104" >4</text>
<line x1="1044.8" x2="1048.0" y1="96.4" y2="96.4" stroke="#222" stroke-width="0.8"/>
<text x="1041.6" y="99.6" class="s" font-size="8.64" text-anchor="end" stroke="#000" stroke-width="0.104" >6</text>
<text x="1049.80" y="71.6" class="s" font-size="8.64" stroke="#000" stroke-width="0.104" >e</text><text x="1055.12" y="68.49" class="s" font-size="6.048" stroke="#000" stroke-width="0.073" textLength="12.76" lengthAdjust="spacingAndGlyphs" >−17</text><text x="1067.88" y="71.6" class="s" font-size="8.64" stroke="#000" stroke-width="0.104" textLength="10.61" lengthAdjust="spacingAndGlyphs" >x2</text><text x="1081.84" y="71.6" class="s" font-size="8.64" font-style="italic" text-anchor="middle" stroke="#000" stroke-width="0.104">Å</text>
<!-- part_spec -->
<clipPath id="spc"><rect x="101.75" y="348.5" width="1197.25" height="84.0"/></clipPath>
<g clip-path="url(#spc)">
<rect x="627.0" y="348.5" width="54.7" height="84.0" fill="#bfbf00"/>
<polygon points="101.8,404.1 105.2,403.7 108.6,403.3 112.0,403.0 115.7,402.8 119.3,402.7 123.0,402.2 128.0,398.6 132.0,401.2 136.0,403.4 139.5,404.4 143.0,404.8 146.2,405.1 149.5,405.1 152.8,405.3 156.0,405.4 159.0,405.3 162.0,405.6 165.0,405.7 168.0,406.2 171.0,406.3 174.0,406.2 177.0,406.7 180.0,406.6 183.0,407.0 186.0,406.9 190.0,408.0 194.0,409.5 197.2,410.1 200.5,411.1 203.8,412.4 207.0,413.3 210.2,412.3 213.5,412.0 216.8,411.1 220.0,410.5 223.2,410.9 226.5,412.0 229.8,412.5 233.0,413.3 236.2,412.5 239.5,411.4 242.8,410.7 246.0,409.8 249.0,410.6 252.0,411.3 255.0,412.2 258.0,413.2 261.2,413.1 264.5,413.6 267.8,413.7 271.0,413.9 274.2,414.2 277.5,414.0 280.8,413.9 284.0,414.0 287.0,414.3 290.0,414.2 293.0,414.8 297.0,413.6 301.0,413.2 304.2,413.6 307.5,413.6 310.8,414.4 314.0,414.5 317.2,415.0 320.5,415.1 323.8,415.5 327.0,415.9 330.0,416.1 333.0,415.4 336.0,415.4 339.3,414.9 342.7,414.4 346.0,413.5 349.7,414.8 353.3,416.1 357.0,417.5 360.5,416.2 364.0,415.4 367.0,415.7 370.0,416.1 373.0,416.0 376.0,416.7 379.0,416.6 383.0,416.0 387.0,415.4 390.2,415.7 393.5,415.6 396.8,416.1 400.0,416.1 403.0,415.9 406.0,415.9 409.0,415.7 412.0,415.6 415.0,415.6 418.0,415.8 421.0,415.9 424.0,415.4 427.0,415.2 430.0,415.6 433.1,415.5 436.2,415.4 439.2,415.4 442.3,415.6 445.4,415.8 448.5,415.7 451.5,415.7 454.6,415.5 457.7,416.0 460.8,415.6 463.8,415.9 466.9,416.1 470.0,415.8 473.1,416.2 476.2,416.3 479.4,416.2 482.5,416.3 485.6,416.0 488.8,416.2 491.9,416.1 495.0,416.5 498.1,416.2 501.2,416.4 504.4,416.7 507.5,416.6 510.6,416.7 513.8,416.5 516.9,416.6 520.0,416.7 523.1,416.6 526.2,416.6 529.4,416.7 532.5,416.6 535.6,416.8 538.8,417.1 541.9,417.1 545.0,417.0 548.1,417.0 551.2,417.0 554.4,416.9 557.5,417.0 560.6,417.3 563.8,417.4 566.9,417.2 570.0,417.4 573.1,417.5 576.2,417.4 579.4,417.4 582.5,417.5 585.6,417.3 588.8,417.5 591.9,417.3 595.0,417.4 598.1,417.6 601.2,417.6 604.4,417.4 607.5,417.7 610.6,417.6 613.8,417.6 616.9,417.3 620.0,417.6 623.0,417.5 626.0,417.7 629.0,417.6 632.0,417.7 635.0,417.6 638.0,417.7 641.0,417.5 644.0,417.6 647.0,417.6 650.0,417.7 653.0,417.4 656.0,417.7 659.0,417.7 662.0,417.6 665.0,417.7 668.0,417.7 671.0,417.4 674.0,417.4 677.0,417.2 680.0,417.6 683.0,417.6 686.0,417.4 689.0,417.6 692.0,417.6 695.0,417.7 698.0,417.4 701.0,417.8 704.0,417.7 707.0,417.8 710.0,417.7 713.0,417.8 716.0,417.9 719.0,417.9 722.0,417.9 725.0,417.6 728.0,417.7 731.0,417.9 734.0,418.0 737.0,417.8 740.0,418.1 743.0,418.1 746.0,417.8 749.0,418.0 752.0,417.9 755.0,417.9 758.0,417.9 761.0,418.0 764.0,418.0 767.0,418.0 770.0,418.0 773.0,418.2 776.0,418.2 779.0,418.3 782.0,418.3 785.0,418.2 788.0,418.5 791.0,418.1 794.0,418.3 797.0,418.3 800.0,418.4 803.0,418.2 806.0,418.6 809.0,418.3 812.0,418.2 815.0,418.4 818.0,418.2 821.0,418.4 824.0,418.3 827.0,418.4 830.0,418.6 833.0,418.5 836.0,418.3 839.0,418.5 842.0,418.4 845.0,418.3 848.0,418.2 851.0,418.4 854.0,418.4 857.0,418.6 860.0,418.6 863.0,418.4 866.0,418.2 869.0,418.5 872.0,418.1 875.0,418.1 878.1,418.3 881.2,418.4 884.3,418.2 887.4,418.4 890.5,418.6 893.6,418.3 896.7,418.4 899.8,418.3 902.9,418.3 906.0,418.7 909.0,418.4 912.1,418.7 915.2,418.7 918.3,418.5 921.4,418.4 924.5,418.8 927.6,418.5 930.7,418.5 933.8,418.5 936.9,418.8 940.0,418.6 943.0,418.5 946.0,418.6 949.0,418.4 952.0,418.7 955.0,418.6 958.0,418.6 961.0,418.8 964.0,418.8 967.0,418.4 970.0,418.7 973.0,418.6 976.0,418.9 979.0,418.9 982.0,418.6 985.0,418.6 988.0,418.6 991.0,419.0 994.0,418.7 997.0,418.8 1000.0,418.8 1003.0,418.9 1006.0,418.9 1009.0,419.0 1012.0,418.6 1015.0,419.0 1018.0,418.8 1021.0,418.9 1024.0,418.8 1027.0,418.8 1030.0,418.9 1033.0,418.9 1036.0,418.9 1039.0,419.1 1042.0,419.0 1045.0,418.7 1048.0,418.8 1051.0,418.9 1054.0,419.2 1057.0,419.2 1060.0,419.0 1063.1,418.7 1066.2,419.0 1069.2,418.8 1072.3,418.8 1075.4,418.8 1078.5,418.7 1081.5,418.6 1084.6,418.7 1087.7,418.4 1090.8,418.3 1093.8,418.5 1096.9,418.1 1100.0,418.1 1103.0,417.1 1108.0,418.2 1111.1,418.6 1114.1,418.6 1117.2,418.5 1120.2,418.4 1123.3,418.7 1126.4,418.8 1129.4,418.4 1132.5,418.6 1135.5,418.7 1138.6,418.7 1141.6,418.6 1144.7,418.6 1147.8,418.8 1150.8,419.0 1153.9,418.6 1156.9,418.7 1160.0,419.1 1163.0,419.0 1166.0,419.0 1169.0,418.6 1172.0,419.0 1175.0,419.1 1178.0,419.1 1181.0,419.0 1184.0,418.6 1187.0,419.0 1190.0,418.7 1193.0,418.9 1196.0,419.1 1199.0,418.9 1202.0,418.6 1205.0,418.7 1208.0,419.0 1211.0,418.6 1214.0,418.9 1217.0,418.8 1220.0,418.6 1223.1,418.9 1226.2,418.6 1229.4,418.6 1232.5,418.8 1235.6,418.6 1238.8,418.7 1241.9,418.9 1245.0,419.0 1248.1,419.1 1251.2,418.7 1254.4,418.9 1257.5,418.9 1260.6,419.0 1263.8,419.0 1266.9,419.2 1270.0,418.9 1273.0,418.9 1276.0,419.3 1279.0,419.2 1282.0,419.5 1285.0,419.6 1288.5,420.8 1292.0,421.5 1297.0,424.2 1297.0,425.1 1292.0,427.9 1288.5,428.6 1285.0,429.8 1282.0,429.9 1279.0,430.2 1276.0,430.1 1273.0,430.5 1270.0,430.5 1266.9,430.2 1263.8,430.4 1260.6,430.4 1257.5,430.5 1254.4,430.5 1251.2,430.7 1248.1,430.3 1245.0,430.4 1241.9,430.5 1238.8,430.7 1235.6,430.8 1232.5,430.6 1229.4,430.8 1226.2,430.8 1223.1,430.5 1220.0,430.8 1217.0,430.6 1214.0,430.5 1211.0,430.8 1208.0,430.4 1205.0,430.7 1202.0,430.8 1199.0,430.5 1196.0,430.3 1193.0,430.5 1190.0,430.7 1187.0,430.4 1184.0,430.8 1181.0,430.4 1178.0,430.3 1175.0,430.3 1172.0,430.4 1169.0,430.8 1166.0,430.4 1163.0,430.4 1160.0,430.3 1156.9,430.7 1153.9,430.8 1150.8,430.4 1147.8,430.6 1144.7,430.8 1141.6,430.8 1138.6,430.7 1135.5,430.7 1132.5,430.8 1129.4,431.0 1126.4,430.6 1123.3,430.7 1120.2,431.0 1117.2,430.9 1114.1,430.8 1111.1,430.8 1108.0,431.2 1103.0,432.3 1100.0,431.3 1096.9,431.3 1093.8,430.9 1090.8,431.1 1087.7,431.0 1084.6,430.7 1081.5,430.8 1078.5,430.7 1075.4,430.6 1072.3,430.6 1069.2,430.6 1066.2,430.4 1063.1,430.7 1060.0,430.4 1057.0,430.2 1054.0,430.2 1051.0,430.5 1048.0,430.6 1045.0,430.7 1042.0,430.4 1039.0,430.3 1036.0,430.5 1033.0,430.5 1030.0,430.5 1027.0,430.6 1024.0,430.6 1021.0,430.5 1018.0,430.6 1015.0,430.4 1012.0,430.8 1009.0,430.4 1006.0,430.5 1003.0,430.5 1000.0,430.6 997.0,430.6 994.0,430.7 991.0,430.4 988.0,430.8 985.0,430.8 982.0,430.8 979.0,430.5 976.0,430.5 973.0,430.8 970.0,430.7 967.0,431.0 964.0,430.6 961.0,430.6 958.0,430.8 955.0,430.8 952.0,430.7 949.0,431.0 946.0,430.8 943.0,430.9 940.0,430.8 936.9,430.6 933.8,430.9 930.7,430.9 927.6,430.9 924.5,430.6 921.4,431.0 918.3,430.9 915.2,430.7 912.1,430.7 909.0,431.0 906.0,430.7 902.9,431.1 899.8,431.1 896.7,431.0 893.6,431.1 890.5,430.8 887.4,431.0 884.3,431.2 881.2,431.0 878.1,431.1 875.0,431.3 872.0,431.3 869.0,430.9 866.0,431.2 863.0,431.0 860.0,430.8 857.0,430.8 854.0,431.0 851.0,431.0 848.0,431.2 845.0,431.1 842.0,431.0 839.0,430.9 836.0,431.1 833.0,430.9 830.0,430.8 827.0,431.0 824.0,431.1 821.0,431.0 818.0,431.2 815.0,431.0 812.0,431.2 809.0,431.1 806.0,430.8 803.0,431.2 800.0,431.0 797.0,431.1 794.0,431.1 791.0,431.3 788.0,430.9 785.0,431.2 782.0,431.1 779.0,431.1 776.0,431.2 773.0,431.2 770.0,431.4 767.0,431.4 764.0,431.4 761.0,431.4 758.0,431.5 755.0,431.5 752.0,431.5 749.0,431.4 746.0,431.6 743.0,431.3 740.0,431.3 737.0,431.6 734.0,431.4 731.0,431.5 728.0,431.7 725.0,431.8 722.0,431.5 719.0,431.5 716.0,431.5 713.0,431.6 710.0,431.7 707.0,431.6 704.0,431.7 701.0,431.6 698.0,431.1 695.0,430.8 692.0,430.9 689.0,430.9 686.0,431.1 683.0,430.9 680.0,430.9 677.0,431.3 674.0,431.1 671.0,431.1 668.0,430.8 665.0,430.8 662.0,430.9 659.0,430.8 656.0,430.8 653.0,431.1 650.0,430.8 647.0,430.9 644.0,430.9 641.0,431.0 638.0,430.8 635.0,430.9 632.0,430.8 629.0,430.9 626.0,430.8 623.0,431.0 620.0,430.9 616.9,431.2 613.8,430.9 610.6,430.9 607.5,430.8 604.4,431.1 601.2,430.9 598.1,430.9 595.0,431.1 591.9,431.2 588.8,431.0 585.6,431.2 582.5,431.0 579.4,431.1 576.2,431.1 573.1,431.0 570.0,431.1 566.9,431.3 563.8,431.1 560.6,431.2 557.5,431.5 554.4,431.6 551.2,431.5 548.1,431.5 545.0,431.5 541.9,431.4 538.8,431.4 535.6,431.7 532.5,431.9 529.4,431.8 526.2,431.9 523.1,431.9 520.0,431.8 516.9,431.9 513.8,432.0 510.6,431.8 507.5,431.9 504.4,431.8 501.2,432.1 498.1,432.3 495.0,432.0 491.9,432.4 488.8,432.3 485.6,432.5 482.5,432.2 479.4,432.3 476.2,432.2 473.1,432.3 470.0,432.7 466.9,432.4 463.8,432.6 460.8,432.9 457.7,432.5 454.6,433.0 451.5,432.8 448.5,432.8 445.4,432.7 442.3,432.9 439.2,433.1 436.2,433.1 433.1,433.0 430.0,432.9 427.0,433.3 424.0,433.1 421.0,432.6 418.0,432.7 415.0,432.9 412.0,432.9 409.0,432.8 406.0,432.6 403.0,432.6 400.0,432.4 396.8,432.4 393.5,432.9 390.2,432.8 387.0,433.1 383.0,432.5 379.0,431.9 376.0,431.8 373.0,432.5 370.0,432.4 367.0,432.8 364.0,433.1 360.5,432.3 357.0,431.0 353.3,432.4 349.7,433.7 346.0,434.5 342.7,434.1 339.3,433.6 336.0,433.1 333.0,433.1 330.0,432.4 327.0,432.6 323.8,433.0 320.5,433.4 317.2,433.5 314.0,434.0 310.8,434.1 307.5,434.5 304.2,434.5 301.0,434.5 297.0,434.5 293.0,433.7 290.0,434.3 287.0,434.2 284.0,434.5 280.8,434.5 277.5,434.5 274.2,434.3 271.0,434.5 267.8,434.5 264.5,434.5 261.2,434.5 258.0,434.5 255.0,434.5 252.0,434.5 249.0,434.5 246.0,434.5 242.8,434.5 239.5,434.5 236.2,434.5 233.0,434.5 229.8,434.5 226.5,434.5 223.2,434.5 220.0,434.5 216.8,434.5 213.5,434.5 210.2,434.5 207.0,434.5 203.8,434.5 200.5,434.5 197.2,434.5 194.0,434.5 190.0,434.5 186.0,434.5 183.0,434.5 180.0,434.5 177.0,434.5 174.0,434.5 171.0,434.5 168.0,434.5 165.0,434.5 162.0,434.5 159.0,434.5 156.0,434.5 152.8,434.5 149.5,434.5 146.2,434.5 143.0,434.5 139.5,434.5 136.0,434.5 132.0,434.5 128.0,434.5 123.0,434.5 119.3,434.5 115.7,434.5 112.0,434.5 108.6,434.5 105.2,434.5 101.8,434.5" fill="#808080" fill-opacity="0.5"/>
<line x1="101.75" x2="1299.0" y1="424.25" y2="424.25" stroke="#808080" stroke-opacity="0.75" stroke-width="1.5"/>
<rect x="123.75" y="346.5" width="12.0" height="88.0" fill="#808080" fill-opacity="0.75" stroke="#000" stroke-width="0.9"/>
<line x1="123.75" y1="372.9" x2="135.75" y2="363.2" stroke="#000" stroke-width="0.9"/>
<line x1="123.75" y1="396.4" x2="135.75" y2="386.8" stroke="#000" stroke-width="0.9"/>
<line x1="123.75" y1="420" x2="135.75" y2="410.4" stroke="#000" stroke-width="0.9"/>
<line x1="123.75" y1="443.6" x2="135.75" y2="434" stroke="#000" stroke-width="0.9"/>
<rect x="1254.3" y="346.5" width="6.5" height="88.0" fill="#808080" fill-opacity="0.75" stroke="#000" stroke-width="0.9"/>
<line x1="1254.3" y1="363.2" x2="1260.8" y2="358.9" stroke="#000" stroke-width="0.9"/>
<line x1="1254.3" y1="386.8" x2="1260.8" y2="381.4" stroke="#000" stroke-width="0.9"/>
<line x1="1254.3" y1="409.3" x2="1260.8" y2="406" stroke="#000" stroke-width="0.9"/>
<line x1="1254.3" y1="430.7" x2="1260.8" y2="427.5" stroke="#000" stroke-width="0.9"/>
<line x1="565.2" x2="565.2" y1="348.5" y2="432.5" stroke="#555" stroke-width="1.15" stroke-dasharray="4.2 2.3"/>
<line x1="875.2" x2="875.2" y1="348.5" y2="432.5" stroke="#555" stroke-width="1.15" stroke-dasharray="4.2 2.3"/>
<line x1="1079.9" x2="1079.9" y1="348.5" y2="432.5" stroke="#555" stroke-width="1.15" stroke-dasharray="4.2 2.3"/>
<line x1="654.1" x2="654.1" y1="348.5" y2="432.5" stroke="#222" stroke-width="1.1" stroke-dasharray="2.2 1.2"/>
<polyline points="101.8,409.3 102.1,409.3 103.8,409.2 105.4,407.1 107.0,405.9 108.6,401.1 110.7,420.0 112.9,409.3 114.5,405.6 116.1,403.9 118.2,409.3 120.4,413.6 122.5,408.2 124.6,415.7 126.8,428.6 128.9,420.0 131.1,424.3 133.2,409.3 135.4,415.7 137.5,408.2 139.6,413.6 141.2,408.2 142.9,405.0 145.0,409.3 146.3,406.0 147.6,401.8 149.0,402.4 150.4,398.6 152.5,415.7 154.6,407.1 156.8,409.3 158.9,397.5 160.5,402.9 162.1,407.1 164.3,413.6 166.4,417.9 168.6,401.8 170.2,407.3 171.8,415.7 173.9,405.0 176.1,401.8 178.2,410.4 180.4,397.5 182.5,407.1 184.6,413.6 186.2,406.4 187.9,401.1 190.0,412.5 191.8,400.7 193.6,388.9 195.0,396.1 196.4,400.7 198.0,402.3 199.6,403.9 201.2,399.5 202.9,396.0 204.5,401.3 206.1,407.1 208.2,411.4 210.4,396.4 212.0,401.5 213.6,406.1 215.2,402.5 216.8,400.7 218.4,404.0 220.0,407.1 222.1,394.7 223.8,401.8 225.4,408.2 227.0,407.1 228.6,401.8 230.2,399.6 231.8,397.5 233.4,398.2 235.0,396.4 236.6,400.0 238.2,406.1 240.4,409.3 242.5,401.1 243.9,401.4 245.4,399.7 246.8,398.6 248.4,402.2 250.0,407.1 251.6,407.7 253.2,408.2 254.6,406.5 256.1,402.1 257.5,399.6 259.1,410.6 260.7,418.9 262.3,412.9 263.9,402.9 266.1,406.1 267.4,406.9 268.8,405.7 270.1,400.8 271.4,401.1 272.9,402.2 274.3,401.5 275.7,402.9 277.3,399.3 278.9,393.2 280.5,401.4 282.1,409.3 283.8,399.4 285.4,388.9 286.8,396.7 288.2,402.5 289.6,410.4 291.1,404.5 292.5,397.3 293.9,392.1 296.1,402.9 298.2,390.0 299.8,392.7 301.4,390.0 303.0,398.0 304.6,407.1 306.2,408.8 307.9,410.4 309.2,404.9 310.5,402.1 311.9,399.7 313.2,397.5 314.8,402.8 316.4,406.1 318.6,399.6 320.2,402.3 321.8,402.9 323.2,401.1 324.6,397.8 326.1,396.4 327.5,399.6 328.9,396.6 330.4,398.6 331.8,399.7 333.2,403.5 334.6,405.0 336.1,402.0 337.5,401.8 338.9,399.6 340.5,408.4 342.1,414.6 343.8,407.1 345.4,399.6 347.0,404.0 348.6,407.1 350.2,404.2 351.8,401.1 353.2,400.5 354.6,397.6 356.1,401.8 358.2,395.4 360.4,402.9 361.8,399.6 363.2,399.3 364.6,397.5 366.2,393.8 367.9,394.3 369.1,396.8 370.4,400.7 372.0,395.3 373.6,389.4 375.0,394.6 376.4,396.4 378.0,397.1 379.6,401.1 381.2,399.2 382.9,398.6 384.3,397.6 385.7,396.7 387.1,394.7 388.6,395.4 390.0,401.9 391.4,401.8 393.0,403.5 394.6,407.1 396.8,397.5 398.4,404.8 400.0,409.3 402.1,407.1 403.4,402.1 404.7,397.5 406.1,401.3 407.5,403.9 409.1,401.5 410.7,394.7 412.9,403.9 414.5,402.7 416.1,399.6 417.7,402.0 419.3,403.9 421.4,398.6 422.7,401.6 424.0,407.1 425.7,397.2 427.4,388.9 428.7,392.0 430.0,398.6 432.1,401.1 434.3,402.9 435.9,396.4 437.5,384.6 439.6,397.5 441.8,394.3 443.9,403.9 445.5,397.4 447.1,394.7 448.8,390.2 450.4,392.1 452.5,397.5 453.9,395.6 455.3,389.4 456.6,394.0 457.9,395.4 459.5,398.2 461.1,401.8 462.4,405.6 463.6,407.1 465.0,403.1 466.4,401.1 467.7,397.6 469.0,395.4 470.4,393.4 471.8,390.0 473.2,390.8 474.6,390.4 475.9,389.3 477.1,389.4 478.8,398.2 480.4,402.9 482.0,399.3 483.6,393.9 485.7,392.6 487.3,396.3 488.9,399.6 490.3,399.8 491.7,402.9 493.0,397.2 494.3,391.1 495.9,395.7 497.5,401.1 499.1,399.8 500.7,398.6 502.3,400.9 503.9,401.1 505.3,404.0 506.7,408.2 508.0,410.0 509.3,411.0 510.9,404.8 512.5,396.4 513.9,399.3 515.3,401.1 516.6,400.9 517.9,394.7 519.5,393.4 521.1,396.4 522.5,394.8 523.9,393.2 525.4,391.2 526.9,392.1 528.6,391.2 530.3,390.4 531.6,395.1 532.9,393.2 534.5,394.4 536.1,399.6 537.7,402.5 539.3,406.1 540.9,402.1 542.5,396.4 543.9,393.4 545.4,391.2 546.8,386.8 548.4,388.8 550.0,394.7 551.6,398.5 553.2,399.6 554.8,397.9 556.4,398.6 558.0,398.6 559.6,401.8 561.2,399.9 562.9,396.4 564.5,402.4 566.1,407.1 567.7,405.7 569.3,406.1 570.9,402.6 572.5,401.1 573.9,399.1 575.3,397.5 576.6,395.4 577.9,393.2 579.5,394.6 581.1,396.4 582.5,394.3 583.9,394.7 585.4,389.1 586.9,389.4 588.2,394.1 589.6,395.4 591.2,394.9 592.9,393.9 594.5,395.2 596.1,399.6 598.2,402.9 599.8,396.8 601.4,394.7 603.0,394.2 604.6,395.4 606.2,391.1 607.9,387.9 609.5,388.9 611.1,395.4 612.4,393.8 613.6,389.1 614.9,385.1 616.2,387.1 617.5,390.0 619.6,395.4 621.2,398.7 622.9,401.1 625.0,399.6 627.1,410.4 629.3,417.4 630.9,410.5 632.5,402.9 633.9,399.8 635.3,393.9 636.6,397.7 637.9,401.1 640.0,397.5 641.6,396.7 643.2,392.6 645.4,391.1 646.8,396.8 648.1,398.6 649.4,401.4 650.7,405.0 652.9,407.1 655.0,417.9 657.1,405.0 659.3,394.7 660.9,392.3 662.5,391.1 664.1,386.7 665.7,384.6 667.3,381.9 668.9,379.7 671.1,384.6 673.2,379.7 675.4,384.6 676.6,385.9 677.9,388.9 679.3,384.7 680.7,380.4 682.1,379.8 683.6,379.2 685.0,377.6 686.6,378.6 688.2,382.5 690.4,386.8 692.0,385.5 693.6,381.4 695.2,380.2 696.8,379.7 698.4,378.5 700.0,377.6 701.6,379.9 703.2,383.6 704.8,380.1 706.4,381.9 708.0,383.3 709.6,384.0 711.2,381.0 712.9,382.5 714.1,386.1 715.4,386.8 716.8,382.8 718.2,378.6 719.5,385.8 720.8,388.9 722.2,386.6 723.6,382.5 725.2,379.7 726.8,375.0 728.9,375.0 730.3,374.7 731.7,370.7 733.9,376.1 735.4,390.4 737.5,383.6 739.1,386.7 740.7,390.0 742.3,387.2 743.9,380.4 745.3,375.4 746.7,370.7 748.2,373.7 749.7,376.1 751.1,372.3 752.5,370.3 753.9,375.2 755.3,378.6 756.6,378.2 757.9,376.1 760.0,384.6 761.3,380.5 762.6,377.6 764.0,377.0 765.4,379.7 767.5,375.0 769.6,383.6 771.2,381.1 772.9,378.6 775.0,386.8 776.3,383.6 777.6,379.3 779.0,377.0 780.4,375.0 781.8,377.0 783.1,381.4 784.4,378.6 785.7,377.6 787.0,378.1 788.3,379.3 789.7,374.8 791.1,377.1 792.5,378.5 793.9,381.4 795.4,378.8 796.9,372.4 798.2,374.7 799.6,380.4 801.0,380.6 802.4,381.4 803.7,381.7 805.0,377.6 806.6,378.3 808.2,377.1 809.6,381.0 811.0,382.5 812.3,378.0 813.6,373.9 815.2,377.0 816.8,383.6 818.9,375.0 820.3,383.6 821.7,384.6 823.0,380.2 824.3,375.0 825.9,376.4 827.5,377.1 829.1,381.4 830.7,381.4 832.3,379.8 833.9,376.1 835.5,380.4 837.1,384.6 838.8,380.5 840.4,379.3 842.0,378.2 843.6,377.6 845.2,374.5 846.8,371.8 848.2,374.4 849.6,378.6 851.1,377.0 852.6,377.6 854.0,377.7 855.4,380.4 856.8,378.6 858.1,377.1 859.4,374.0 860.7,372.4 862.9,380.4 864.1,379.8 865.4,378.2 866.8,384.9 868.2,388.9 870.4,390.0 871.8,389.9 873.1,388.9 875.3,396.4 877.4,387.9 879.6,375.0 881.7,379.3 883.0,376.1 884.3,372.9 885.6,379.7 886.9,382.5 888.2,380.7 889.6,377.1 890.9,372.6 892.2,371.8 893.6,376.8 895.0,383.6 896.3,384.4 897.6,384.6 899.0,379.8 900.4,377.1 901.8,377.6 903.1,376.1 904.4,374.9 905.7,378.2 907.3,373.6 908.9,373.9 910.5,373.6 912.1,370.7 913.8,374.7 915.4,377.1 917.0,379.0 918.6,385.1 920.2,378.9 921.8,372.4 923.2,373.9 924.6,371.8 925.9,377.3 927.1,385.7 928.4,381.5 929.7,380.4 931.1,374.5 932.5,371.8 934.1,369.4 935.7,369.6 937.0,373.1 938.3,380.5 939.6,386.8 940.9,380.6 942.1,378.2 943.8,376.2 945.4,373.9 947.0,375.8 948.6,371.8 949.9,369.9 951.1,370.7 952.5,370.6 953.9,368.1 955.3,373.1 956.7,375.0 958.0,369.3 959.3,369.6 960.9,371.9 962.5,373.9 963.9,372.3 965.3,370.7 966.6,367.1 967.9,364.3 969.5,368.0 971.1,369.6 972.7,372.8 974.3,377.1 975.9,375.2 977.5,372.4 978.9,371.1 980.3,370.7 982.4,380.4 983.7,373.2 985.0,366.4 986.3,362.4 987.6,360.4 989.7,371.8 991.9,360.4 993.2,366.9 994.6,367.5 996.8,364.3 998.4,367.4 1000.0,370.7 1001.3,366.6 1002.6,365.4 1004.0,365.7 1005.4,361.1 1006.8,365.8 1008.1,366.4 1009.6,365.6 1011.1,365.4 1012.5,365.6 1013.9,367.5 1015.5,367.1 1017.1,368.6 1018.4,373.4 1019.7,375.0 1021.1,374.0 1022.5,373.9 1023.9,370.9 1025.3,369.6 1026.6,368.6 1027.9,365.4 1029.5,366.1 1031.1,367.5 1032.5,365.8 1033.9,364.3 1035.4,372.9 1036.8,371.3 1038.1,364.7 1039.4,366.2 1040.7,365.4 1042.9,362.6 1044.1,361.8 1045.4,357.9 1046.8,361.1 1048.2,363.2 1049.6,366.0 1051.0,365.4 1052.3,364.1 1053.6,363.2 1054.9,367.1 1056.1,368.6 1057.5,366.7 1058.9,362.1 1060.5,363.2 1062.1,365.4 1063.8,365.3 1065.4,368.6 1066.8,370.3 1068.1,370.7 1069.4,368.4 1070.7,366.4 1072.0,362.9 1073.3,357.9 1074.7,357.3 1076.1,358.3 1077.5,358.5 1078.9,357.4 1080.1,362.6 1081.4,365.4 1082.7,366.3 1084.0,361.1 1085.4,361.8 1086.8,357.9 1088.2,362.1 1089.6,365.4 1090.9,366.1 1092.1,363.2 1094.3,368.6 1096.4,360.4 1098.6,380.4 1099.9,373.7 1101.1,368.6 1102.5,365.3 1103.9,358.9 1105.2,359.6 1106.5,360.0 1108.9,358.3 1110.1,364.1 1111.4,366.4 1112.7,368.5 1114.0,369.6 1115.4,366.1 1116.8,363.2 1118.4,363.0 1120.0,364.7 1121.3,365.1 1122.6,362.1 1124.0,363.8 1125.4,365.4 1127.0,371.1 1128.6,375.0 1129.9,367.3 1131.1,358.3 1132.5,360.8 1133.9,368.6 1135.5,367.7 1137.1,365.4 1138.8,364.9 1140.4,365.4 1141.8,364.8 1143.1,363.2 1144.4,364.4 1145.7,364.3 1147.0,359.6 1148.3,359.6 1149.7,362.6 1151.1,366.4 1152.5,369.0 1153.9,371.8 1155.1,368.0 1156.4,363.2 1157.7,367.6 1159.0,369.6 1161.1,352.5 1162.5,357.0 1163.9,363.2 1165.3,358.6 1166.7,354.6 1168.2,363.0 1169.7,369.6 1171.1,363.7 1172.5,362.6 1173.9,365.3 1175.3,363.2 1176.6,363.1 1177.9,365.4 1179.1,365.5 1180.4,362.1 1181.8,361.3 1183.2,360.0 1184.6,363.0 1186.0,361.1 1187.3,361.7 1188.6,359.6 1189.9,359.7 1191.1,360.0 1192.5,363.2 1193.9,370.7 1196.1,359.6 1197.5,361.6 1198.9,363.2 1200.1,365.2 1201.4,366.4 1202.7,368.2 1204.0,368.6 1205.4,364.6 1206.8,363.9 1208.2,364.1 1209.6,366.4 1210.9,361.4 1212.1,358.3 1213.9,353.6 1215.1,358.2 1216.4,362.1 1217.7,361.9 1219.0,363.9 1220.4,360.2 1221.8,356.8 1223.2,359.1 1224.6,358.9 1225.9,361.6 1227.1,365.4 1228.4,365.5 1229.7,362.1 1231.1,365.7 1232.5,368.6 1233.9,366.1 1235.3,364.3 1236.6,369.5 1237.9,371.8 1239.1,369.7 1240.4,366.4 1241.8,365.0 1243.2,364.3 1244.6,367.6 1246.0,372.4 1247.3,368.8 1248.6,365.4 1249.9,364.7 1251.1,363.2 1252.5,367.9 1253.9,369.6 1256.1,360.0 1257.7,366.6 1259.3,372.4 1260.6,366.5 1261.9,362.1 1263.2,359.6 1264.6,360.4 1266.2,362.2 1267.9,363.2 1269.1,363.2 1270.4,362.1 1271.8,366.8 1273.2,368.6 1274.8,364.1 1276.4,361.1 1278.6,370.7 1279.9,363.9 1281.1,360.4 1282.5,364.0 1283.9,365.4 1285.3,365.7 1286.7,366.4 1288.0,365.4 1289.3,367.5 1290.9,366.4 1292.5,361.1 1294.6,366.4 1296.8,365.4 1298.9,365.4" fill="none" stroke="#0000ff" stroke-width="1.2" stroke-linejoin="round"/>
</g>
<rect x="101.75" y="348.5" width="1197.25" height="84.0" fill="none" stroke="#222" stroke-width="0.9"/>
<line x1="103.5" x2="103.5" y1="432.5" y2="435.9" stroke="#222" stroke-width="0.8"/>
<text x="103.5" y="446.3" class="s" font-size="9.72" text-anchor="middle" stroke="#000" stroke-width="0.117" textLength="24.74" lengthAdjust="spacingAndGlyphs" >3500</text>
<line x1="162.3" x2="162.3" y1="432.5" y2="435.9" stroke="#222" stroke-width="0.8"/>
<text x="162.3" y="446.3" class="s" font-size="9.72" text-anchor="middle" stroke="#000" stroke-width="0.117" textLength="24.74" lengthAdjust="spacingAndGlyphs" >3600</text>
<line x1="221.1" x2="221.1" y1="432.5" y2="435.9" stroke="#222" stroke-width="0.8"/>
<text x="221.1" y="446.3" class="s" font-size="9.72" text-anchor="middle" stroke="#000" stroke-width="0.117" textLength="24.74" lengthAdjust="spacingAndGlyphs" >3700</text>
<line x1="280.0" x2="280.0" y1="432.5" y2="435.9" stroke="#222" stroke-width="0.8"/>
<text x="280.0" y="446.3" class="s" font-size="9.72" text-anchor="middle" stroke="#000" stroke-width="0.117" textLength="24.74" lengthAdjust="spacingAndGlyphs" >3800</text>
<line x1="338.8" x2="338.8" y1="432.5" y2="435.9" stroke="#222" stroke-width="0.8"/>
<text x="338.8" y="446.3" class="s" font-size="9.72" text-anchor="middle" stroke="#000" stroke-width="0.117" textLength="24.74" lengthAdjust="spacingAndGlyphs" >3900</text>
<line x1="397.6" x2="397.6" y1="432.5" y2="435.9" stroke="#222" stroke-width="0.8"/>
<text x="397.6" y="446.3" class="s" font-size="9.72" text-anchor="middle" stroke="#000" stroke-width="0.117" textLength="24.74" lengthAdjust="spacingAndGlyphs" >4000</text>
<line x1="456.4" x2="456.4" y1="432.5" y2="435.9" stroke="#222" stroke-width="0.8"/>
<text x="456.4" y="446.3" class="s" font-size="9.72" text-anchor="middle" stroke="#000" stroke-width="0.117" textLength="24.74" lengthAdjust="spacingAndGlyphs" >4100</text>
<line x1="515.2" x2="515.2" y1="432.5" y2="435.9" stroke="#222" stroke-width="0.8"/>
<text x="515.2" y="446.3" class="s" font-size="9.72" text-anchor="middle" stroke="#000" stroke-width="0.117" textLength="24.74" lengthAdjust="spacingAndGlyphs" >4200</text>
<line x1="574.1" x2="574.1" y1="432.5" y2="435.9" stroke="#222" stroke-width="0.8"/>
<text x="574.1" y="446.3" class="s" font-size="9.72" text-anchor="middle" stroke="#000" stroke-width="0.117" textLength="24.74" lengthAdjust="spacingAndGlyphs" >4300</text>
<line x1="632.9" x2="632.9" y1="432.5" y2="435.9" stroke="#222" stroke-width="0.8"/>
<text x="632.9" y="446.3" class="s" font-size="9.72" text-anchor="middle" stroke="#000" stroke-width="0.117" textLength="24.74" lengthAdjust="spacingAndGlyphs" >4400</text>
<line x1="691.7" x2="691.7" y1="432.5" y2="435.9" stroke="#222" stroke-width="0.8"/>
<text x="691.7" y="446.3" class="s" font-size="9.72" text-anchor="middle" stroke="#000" stroke-width="0.117" textLength="24.74" lengthAdjust="spacingAndGlyphs" >4500</text>
<line x1="750.5" x2="750.5" y1="432.5" y2="435.9" stroke="#222" stroke-width="0.8"/>
<text x="750.5" y="446.3" class="s" font-size="9.72" text-anchor="middle" stroke="#000" stroke-width="0.117" textLength="24.74" lengthAdjust="spacingAndGlyphs" >4600</text>
<line x1="809.3" x2="809.3" y1="432.5" y2="435.9" stroke="#222" stroke-width="0.8"/>
<text x="809.3" y="446.3" class="s" font-size="9.72" text-anchor="middle" stroke="#000" stroke-width="0.117" textLength="24.74" lengthAdjust="spacingAndGlyphs" >4700</text>
<line x1="868.2" x2="868.2" y1="432.5" y2="435.9" stroke="#222" stroke-width="0.8"/>
<text x="868.2" y="446.3" class="s" font-size="9.72" text-anchor="middle" stroke="#000" stroke-width="0.117" textLength="24.74" lengthAdjust="spacingAndGlyphs" >4800</text>
<line x1="927.0" x2="927.0" y1="432.5" y2="435.9" stroke="#222" stroke-width="0.8"/>
<text x="927.0" y="446.3" class="s" font-size="9.72" text-anchor="middle" stroke="#000" stroke-width="0.117" textLength="24.74" lengthAdjust="spacingAndGlyphs" >4900</text>
<line x1="985.8" x2="985.8" y1="432.5" y2="435.9" stroke="#222" stroke-width="0.8"/>
<text x="985.8" y="446.3" class="s" font-size="9.72" text-anchor="middle" stroke="#000" stroke-width="0.117" textLength="24.74" lengthAdjust="spacingAndGlyphs" >5000</text>
<line x1="1044.6" x2="1044.6" y1="432.5" y2="435.9" stroke="#222" stroke-width="0.8"/>
<text x="1044.6" y="446.3" class="s" font-size="9.72" text-anchor="middle" stroke="#000" stroke-width="0.117" textLength="24.74" lengthAdjust="spacingAndGlyphs" >5100</text>
<line x1="1103.4" x2="1103.4" y1="432.5" y2="435.9" stroke="#222" stroke-width="0.8"/>
<text x="1103.4" y="446.3" class="s" font-size="9.72" text-anchor="middle" stroke="#000" stroke-width="0.117" textLength="24.74" lengthAdjust="spacingAndGlyphs" >5200</text>
<line x1="1162.3" x2="1162.3" y1="432.5" y2="435.9" stroke="#222" stroke-width="0.8"/>
<text x="1162.3" y="446.3" class="s" font-size="9.72" text-anchor="middle" stroke="#000" stroke-width="0.117" textLength="24.74" lengthAdjust="spacingAndGlyphs" >5300</text>
<line x1="1221.1" x2="1221.1" y1="432.5" y2="435.9" stroke="#222" stroke-width="0.8"/>
<text x="1221.1" y="446.3" class="s" font-size="9.72" text-anchor="middle" stroke="#000" stroke-width="0.117" textLength="24.74" lengthAdjust="spacingAndGlyphs" >5400</text>
<line x1="1279.9" x2="1279.9" y1="432.5" y2="435.9" stroke="#222" stroke-width="0.8"/>
<text x="1279.9" y="446.3" class="s" font-size="9.72" text-anchor="middle" stroke="#000" stroke-width="0.117" textLength="24.74" lengthAdjust="spacingAndGlyphs" >5500</text>
<line x1="98.35" x2="101.75" y1="424.2" y2="424.2" stroke="#222" stroke-width="0.8"/>
<text x="95.3" y="427.9" class="s" font-size="9.72" text-anchor="end" stroke="#000" stroke-width="0.117" >0</text>
<line x1="98.35" x2="101.75" y1="392.1" y2="392.1" stroke="#222" stroke-width="0.8"/>
<text x="95.3" y="395.8" class="s" font-size="9.72" text-anchor="end" stroke="#000" stroke-width="0.117" >5</text>
<line x1="98.35" x2="101.75" y1="360.1" y2="360.1" stroke="#222" stroke-width="0.8"/>
<text x="95.3" y="363.7" class="s" font-size="9.72" text-anchor="end" stroke="#000" stroke-width="0.117" textLength="12.37" lengthAdjust="spacingAndGlyphs" >10</text>
<text x="103.60" y="346.6" class="s" font-size="9.72" stroke="#000" stroke-width="0.117" >e</text><text x="109.58" y="343.10" class="s" font-size="6.804" stroke="#000" stroke-width="0.082" textLength="14.36" lengthAdjust="spacingAndGlyphs" >−17</text><text x="123.94" y="346.6" class="s" font-size="9.72" stroke="#000" stroke-width="0.117" textLength="11.94" lengthAdjust="spacingAndGlyphs" >x2</text><text x="139.60" y="346.6" class="s" font-size="9.72" font-style="italic" text-anchor="middle" stroke="#000" stroke-width="0.117">Å</text>
<clipPath id="labclip"><rect x="0" y="270" width="1400" height="78.10000000000002"/></clipPath>
<text transform="translate(131.0,319.6) rotate(90)" class="s" font-size="9.72" fill="#8a2be2" textLength="13.92" lengthAdjust="spacingAndGlyphs">NV</text>
<g clip-path="url(#labclip)"><text transform="translate(131.0,345.9) rotate(90)" class="s" font-size="9.72" fill="#8a2be2" text-anchor="middle">{</text></g>
<text transform="translate(159.5,320.3) rotate(90)" class="s" font-size="9.72" fill="#800080" textLength="16.30" lengthAdjust="spacingAndGlyphs">CIV</text>
<g clip-path="url(#labclip)"><text transform="translate(159.5,345.9) rotate(90)" class="s" font-size="9.72" fill="#800080" text-anchor="middle">{</text></g>
<text transform="translate(169.5,325.1) rotate(90)" class="s" font-size="9.72" fill="#8a2be2" textLength="14.60" lengthAdjust="spacingAndGlyphs">SiII</text>
<g clip-path="url(#labclip)"><text transform="translate(169.5,345.9) rotate(90)" class="s" font-size="9.72" fill="#8a2be2" text-anchor="middle">{</text></g>
<text transform="translate(208.5,324.1) rotate(90)" class="s" font-size="9.72" fill="#ff00ff" textLength="12.52" lengthAdjust="spacingAndGlyphs">CII</text>
<g clip-path="url(#labclip)"><text transform="translate(208.5,345.9) rotate(90)" class="s" font-size="9.72" fill="#ff00ff" text-anchor="middle">{</text></g>
<text transform="translate(262.5,319.6) rotate(90)" class="s" font-size="9.72" fill="#ff0000" textLength="17.00" lengthAdjust="spacingAndGlyphs">OVI</text>
<g clip-path="url(#labclip)"><text transform="translate(262.5,345.9) rotate(90)" class="s" font-size="9.72" fill="#ff0000" text-anchor="middle">{</text></g>
<text transform="translate(284.0,320.7) rotate(90)" class="s" font-size="9.72" fill="#800080" textLength="19.02" lengthAdjust="spacingAndGlyphs">HeII</text>
<g clip-path="url(#labclip)"><text transform="translate(284.0,345.9) rotate(90)" class="s" font-size="9.72" fill="#800080" text-anchor="middle">{</text></g>
<text transform="translate(265.2,278.9) rotate(90)" class="s" font-size="9.72" fill="#ffa500" textLength="18.39" lengthAdjust="spacingAndGlyphs">SiIV</text>
<g><text transform="translate(265.2,303.5) rotate(90)" class="s" font-size="9.72" fill="#ffa500" text-anchor="middle">{</text></g>
<text transform="translate(282.5,280.9) rotate(90)" class="s" font-size="9.72" fill="#4169e1" textLength="13.38" lengthAdjust="spacingAndGlyphs">OII</text>
<g><text transform="translate(282.5,303.5) rotate(90)" class="s" font-size="9.72" fill="#4169e1" text-anchor="middle">{</text></g>
<text transform="translate(395.5,321.3) rotate(90)" class="s" font-size="9.72" fill="#8a2be2" textLength="18.39" lengthAdjust="spacingAndGlyphs">SiIV</text>
<g clip-path="url(#labclip)"><text transform="translate(395.5,345.9) rotate(90)" class="s" font-size="9.72" fill="#8a2be2" text-anchor="middle">{</text></g>
<text transform="translate(492.8,323.3) rotate(90)" class="s" font-size="9.72" fill="#87ceeb" textLength="13.38" lengthAdjust="spacingAndGlyphs">OII</text>
<g clip-path="url(#labclip)"><text transform="translate(492.8,345.9) rotate(90)" class="s" font-size="9.72" fill="#87ceeb" text-anchor="middle">{</text></g>
<text transform="translate(505.9,320.3) rotate(90)" class="s" font-size="9.72" fill="#ffa500" textLength="16.30" lengthAdjust="spacingAndGlyphs">CIV</text>
<g clip-path="url(#labclip)"><text transform="translate(505.9,345.9) rotate(90)" class="s" font-size="9.72" fill="#ffa500" text-anchor="middle">{</text></g>
<text transform="translate(515.1,323.3) rotate(90)" class="s" font-size="9.72" fill="#87ceeb" textLength="13.38" lengthAdjust="spacingAndGlyphs">OII</text>
<g clip-path="url(#labclip)"><text transform="translate(515.1,345.9) rotate(90)" class="s" font-size="9.72" fill="#87ceeb" text-anchor="middle">{</text></g>
<text transform="translate(628.5,307.3) rotate(90)" class="s" font-size="9.72" fill="#87ceeb" textLength="32.44" lengthAdjust="spacingAndGlyphs">(K)CaII</text>
<g clip-path="url(#labclip)"><text transform="translate(628.5,345.9) rotate(90)" class="s" font-size="9.72" fill="#87ceeb" text-anchor="middle">{</text></g>
<text transform="translate(704.5,319.6) rotate(90)" class="s" font-size="9.72" fill="#ff0000" textLength="13.92" lengthAdjust="spacingAndGlyphs">NV</text>
<g clip-path="url(#labclip)"><text transform="translate(704.5,345.9) rotate(90)" class="s" font-size="9.72" fill="#ff0000" text-anchor="middle">{</text></g>
<text transform="translate(753.5,325.1) rotate(90)" class="s" font-size="9.72" fill="#ff0000" textLength="14.60" lengthAdjust="spacingAndGlyphs">SiII</text>
<g clip-path="url(#labclip)"><text transform="translate(753.5,345.9) rotate(90)" class="s" font-size="9.72" fill="#ff0000" text-anchor="middle">{</text></g>
<text transform="translate(804.5,320.7) rotate(90)" class="s" font-size="9.72" fill="#8a2be2" textLength="19.02" lengthAdjust="spacingAndGlyphs">HeII</text>
<g clip-path="url(#labclip)"><text transform="translate(804.5,345.9) rotate(90)" class="s" font-size="9.72" fill="#8a2be2" text-anchor="middle">{</text></g>
<text transform="translate(895.1,326.7) rotate(90)" class="s" font-size="9.72" fill="#87ceeb" textLength="13.06" lengthAdjust="spacingAndGlyphs">Hγ</text>
<g clip-path="url(#labclip)"><text transform="translate(895.1,345.9) rotate(90)" class="s" font-size="9.72" fill="#87ceeb" text-anchor="middle">{</text></g>
<text transform="translate(920.5,326.7) rotate(90)" class="s" font-size="9.72" fill="#87ceeb" textLength="13.06" lengthAdjust="spacingAndGlyphs">Hγ</text>
<g clip-path="url(#labclip)"><text transform="translate(920.5,345.9) rotate(90)" class="s" font-size="9.72" fill="#87ceeb" text-anchor="middle">{</text></g>
<text transform="translate(964.8,326.2) rotate(90)" class="s" font-size="9.72" fill="#4169e1" textLength="13.51" lengthAdjust="spacingAndGlyphs">Hβ</text>
<g clip-path="url(#labclip)"><text transform="translate(964.8,345.9) rotate(90)" class="s" font-size="9.72" fill="#4169e1" text-anchor="middle">{</text></g>
<text transform="translate(1023.0,323.5) rotate(90)" class="s" font-size="9.72" fill="#4169e1" textLength="16.25" lengthAdjust="spacingAndGlyphs">OIII</text>
<g clip-path="url(#labclip)"><text transform="translate(1023.0,345.9) rotate(90)" class="s" font-size="9.72" fill="#4169e1" text-anchor="middle">{</text></g>
<text transform="translate(1041.0,321.3) rotate(90)" class="s" font-size="9.72" fill="#ff0000" textLength="18.39" lengthAdjust="spacingAndGlyphs">SiIV</text>
<g clip-path="url(#labclip)"><text transform="translate(1041.0,345.9) rotate(90)" class="s" font-size="9.72" fill="#ff0000" text-anchor="middle">{</text></g>
<text transform="translate(1051.9,323.5) rotate(90)" class="s" font-size="9.72" fill="#4169e1" textLength="16.25" lengthAdjust="spacingAndGlyphs">OIII</text>
<g clip-path="url(#labclip)"><text transform="translate(1051.9,345.9) rotate(90)" class="s" font-size="9.72" fill="#4169e1" text-anchor="middle">{</text></g>
<text transform="translate(1079.2,326.7) rotate(90)" class="s" font-size="9.72" fill="#008000" textLength="13.06" lengthAdjust="spacingAndGlyphs">Hγ</text>
<g clip-path="url(#labclip)"><text transform="translate(1079.2,345.9) rotate(90)" class="s" font-size="9.72" fill="#008000" text-anchor="middle">{</text></g>
<text transform="translate(1078.2,281.9) rotate(90)" class="s" font-size="9.72" fill="#ffa500" textLength="15.39" lengthAdjust="spacingAndGlyphs">CIII</text>
<g><text transform="translate(1078.2,303.5) rotate(90)" class="s" font-size="9.72" fill="#ffa500" text-anchor="middle">{</text></g>
<text transform="translate(1218.8,324.1) rotate(90)" class="s" font-size="9.72" fill="#800080" textLength="12.52" lengthAdjust="spacingAndGlyphs">CII</text>
<g clip-path="url(#labclip)"><text transform="translate(1218.8,345.9) rotate(90)" class="s" font-size="9.72" fill="#800080" text-anchor="middle">{</text></g>
<text transform="translate(1237.5,326.2) rotate(90)" class="s" font-size="9.72" fill="#87ceeb" textLength="13.51" lengthAdjust="spacingAndGlyphs">Hβ</text>
<g clip-path="url(#labclip)"><text transform="translate(1237.5,345.9) rotate(90)" class="s" font-size="9.72" fill="#87ceeb" text-anchor="middle">{</text></g>
<text transform="translate(1255.5,324.3) rotate(90)" class="s" font-size="9.72" fill="#8a2be2" textLength="15.39" lengthAdjust="spacingAndGlyphs">CIII</text>
<g clip-path="url(#labclip)"><text transform="translate(1255.5,345.9) rotate(90)" class="s" font-size="9.72" fill="#8a2be2" text-anchor="middle">{</text></g>
<text transform="translate(1267.1,326.2) rotate(90)" class="s" font-size="9.72" fill="#87ceeb" textLength="13.51" lengthAdjust="spacingAndGlyphs">Hβ</text>
<g clip-path="url(#labclip)"><text transform="translate(1267.1,345.9) rotate(90)" class="s" font-size="9.72" fill="#87ceeb" text-anchor="middle">{</text></g>
<rect x="454.9" y="449.9" width="16.8" height="5.9" fill="#ff0000"/>
<text x="478.3" y="455.6" class="s" font-size="6.95" stroke="#000" stroke-width="0.083" textLength="11.93" lengthAdjust="spacingAndGlyphs" >Lyα</text>
<rect x="508.7" y="449.9" width="16.8" height="5.9" fill="#008000"/>
<text x="531.8" y="455.6" class="s" font-size="6.95" stroke="#000" stroke-width="0.083" textLength="9.57" lengthAdjust="spacingAndGlyphs" >OII</text>
<rect x="561.5" y="449.9" width="16.8" height="5.9" fill="#8a2be2"/>
<text x="584.9" y="455.6" class="s" font-size="6.95" stroke="#000" stroke-width="0.083" textLength="11.66" lengthAdjust="spacingAndGlyphs" >CIV</text>
<rect x="615.7" y="449.9" width="16.8" height="5.9" fill="#800080"/>
<text x="639.5" y="455.6" class="s" font-size="6.95" stroke="#000" stroke-width="0.083" textLength="11.00" lengthAdjust="spacingAndGlyphs" >CIII</text>
<rect x="667.3" y="449.9" width="16.8" height="5.9" fill="#ff00ff"/>
<text x="690.7" y="455.6" class="s" font-size="6.95" stroke="#000" stroke-width="0.083" textLength="14.51" lengthAdjust="spacingAndGlyphs" >MgII</text>
<rect x="724.2" y="449.9" width="16.8" height="5.9" fill="#4169e1"/>
<text x="747.6" y="455.6" class="s" font-size="6.95" stroke="#000" stroke-width="0.083" textLength="9.34" lengthAdjust="spacingAndGlyphs" >Hγ</text>
<rect x="774.3" y="449.9" width="16.8" height="5.9" fill="#ffa500"/>
<text x="797.4" y="455.6" class="s" font-size="6.95" stroke="#000" stroke-width="0.083" textLength="13.60" lengthAdjust="spacingAndGlyphs" >HeII</text>
<rect x="829" y="449.9" width="16.8" height="5.9" fill="#87ceeb"/>
<text x="851.6" y="455.6" class="s" font-size="6.95" stroke="#000" stroke-width="0.083" textLength="23.19" lengthAdjust="spacingAndGlyphs" >(K)CaII</text>
<rect x="895" y="449.9" width="16.8" height="5.9" fill="#87ceeb"/>
<text x="918" y="455.6" class="s" font-size="6.95" stroke="#000" stroke-width="0.083" textLength="23.86" lengthAdjust="spacingAndGlyphs" >(H)CaII</text>
<!-- part_panels -->
<defs>
<radialGradient id="galc"><stop offset="0" stop-color="#000"/><stop offset="0.62" stop-color="#000"/><stop offset="0.8" stop-color="#000" stop-opacity="0.75"/><stop offset="1" stop-color="#000" stop-opacity="0"/></radialGradient>
<radialGradient id="galh"><stop offset="0" stop-color="#000" stop-opacity="0.9"/><stop offset="0.5" stop-color="#000" stop-opacity="0.55"/><stop offset="0.75" stop-color="#000" stop-opacity="0.2"/><stop offset="1" stop-color="#000" stop-opacity="0"/></radialGradient>
<radialGradient id="star"><stop offset="0" stop-color="#000"/><stop offset="0.3" stop-color="#000" stop-opacity="0.9"/><stop offset="0.6" stop-color="#000" stop-opacity="0.35"/><stop offset="1" stop-color="#000" stop-opacity="0"/></radialGradient>
<radialGradient id="faint"><stop offset="0" stop-color="#000" stop-opacity="0.22"/><stop offset="1" stop-color="#000" stop-opacity="0"/></radialGradient>
<filter id="bgn" x="0" y="0" width="100%" height="100%"><feTurbulence type="fractalNoise" baseFrequency="0.25" numOctaves="1" seed="3"/><feColorMatrix type="matrix" values="0 0 0 0 1  0 0 0 0 1  0 0 0 0 1  1.6 0 0 0 -0.5"/></filter>
<filter id="lfb2" x="-10%" y="-10%" width="120%" height="120%"><feGaussianBlur stdDeviation="1.1"/></filter>
<filter id="lfb" x="-10%" y="-10%" width="120%" height="120%"><feGaussianBlur stdDeviation="2.6"/></filter>
</defs>
<clipPath id="pc1"><rect x="70.2" y="532.5" width="148" height="148"/></clipPath>
<g clip-path="url(#pc1)">
<rect x="70.2" y="532.5" width="148" height="148" fill="#f1f1f1"/>
<rect x="70.2" y="532.5" width="148" height="148" fill="#fff" filter="url(#bgn)" opacity="0.55"/>
<g transform="rotate(7 137.1 612.4)">
<ellipse cx="137.1" cy="612.4" rx="25.4" ry="38.2" fill="url(#galh)"/>
<ellipse cx="137.1" cy="612.4" rx="18.0" ry="29.2" fill="url(#galc)"/>
</g>
<circle cx="202.2" cy="593.1" r="8.2" fill="url(#star)"/>
<ellipse cx="89.9" cy="649.1" rx="6.5" ry="5" fill="url(#faint)"/>
</g>
<circle cx="132.1" cy="554.6" r="12.2" fill="none" stroke="#484848" stroke-width="1.15" opacity="0.72"/>
<circle cx="156.7" cy="555.2" r="12.2" fill="none" stroke="#484848" stroke-width="1.15" opacity="0.72"/>
<circle cx="117.5" cy="572.2" r="12.2" fill="none" stroke="#484848" stroke-width="1.15" opacity="0.72"/>
<circle cx="141.8" cy="575.0" r="12.2" fill="none" stroke="#484848" stroke-width="1.15" opacity="0.72"/>
<circle cx="165.6" cy="578.8" r="12.2" fill="none" stroke="#484848" stroke-width="1.15" opacity="0.72"/>
<circle cx="189.8" cy="581.0" r="12.2" fill="none" stroke="#484848" stroke-width="1.15" opacity="0.72"/>
<circle cx="103.2" cy="591.6" r="12.2" fill="none" stroke="#484848" stroke-width="1.15" opacity="0.72"/>
<circle cx="174.8" cy="599.7" r="12.2" fill="none" stroke="#484848" stroke-width="1.15" opacity="0.72"/>
<circle cx="198.6" cy="603.5" r="12.2" fill="none" stroke="#484848" stroke-width="1.15" opacity="0.72"/>
<circle cx="88.5" cy="611.4" r="12.2" fill="none" stroke="#484848" stroke-width="1.15" opacity="0.72"/>
<circle cx="113.8" cy="614.0" r="12.2" fill="none" stroke="#484848" stroke-width="1.15" opacity="0.72"/>
<circle cx="184.7" cy="621.7" r="12.2" fill="none" stroke="#484848" stroke-width="1.15" opacity="0.72"/>
<circle cx="98.4" cy="632.1" r="12.2" fill="none" stroke="#484848" stroke-width="1.15" opacity="0.72"/>
<circle cx="122.6" cy="636.1" r="12.2" fill="none" stroke="#484848" stroke-width="1.15" opacity="0.72"/>
<circle cx="146.8" cy="638.7" r="12.2" fill="none" stroke="#484848" stroke-width="1.15" opacity="0.72"/>
<circle cx="170.0" cy="640.9" r="12.2" fill="none" stroke="#484848" stroke-width="1.15" opacity="0.72"/>
<circle cx="131.4" cy="658.1" r="12.2" fill="none" stroke="#484848" stroke-width="1.15" opacity="0.72"/>
<circle cx="155.6" cy="660.9" r="12.2" fill="none" stroke="#484848" stroke-width="1.15" opacity="0.72"/>
<circle cx="127.4" cy="594.6" r="12.2" fill="none" stroke="#ffa500" stroke-width="1.3"/>
<circle cx="151.9" cy="597.1" r="12.2" fill="none" stroke="#00ff00" stroke-width="1.3"/>
<circle cx="160.5" cy="619.5" r="12.2" fill="none" stroke="#ff0000" stroke-width="1.3"/>
<circle cx="136.5" cy="616.2" r="12.2" fill="none" stroke="#0000ff" stroke-width="1.3"/>
<path d="M141.5 606.5H146.5M144.0 604.0V609.0" stroke="#ff0000" stroke-width="0.9"/>
<rect x="70.2" y="532.5" width="148" height="148" fill="none" stroke="#222" stroke-width="0.9"/>
<line x1="78.4" x2="78.4" y1="680.5" y2="683.9" stroke="#222" stroke-width="0.8"/>
<line x1="66.8" x2="70.2" y1="672.1" y2="672.1" stroke="#222" stroke-width="0.8"/>
<text x="78.4" y="695.7" class="s" font-size="10.8" text-anchor="middle" stroke="#000" stroke-width="0.13" textLength="15.92" lengthAdjust="spacingAndGlyphs" >−4</text>
<text x="64.2" y="676.0" class="s" font-size="10.8" text-anchor="end" stroke="#000" stroke-width="0.13" textLength="15.92" lengthAdjust="spacingAndGlyphs" >−4</text>
<line x1="111.2" x2="111.2" y1="680.5" y2="683.9" stroke="#222" stroke-width="0.8"/>
<line x1="66.8" x2="70.2" y1="639.3" y2="639.3" stroke="#222" stroke-width="0.8"/>
<text x="111.2" y="695.7" class="s" font-size="10.8" text-anchor="middle" stroke="#000" stroke-width="0.13" textLength="15.92" lengthAdjust="spacingAndGlyphs" >−2</text>
<text x="64.2" y="643.2" class="s" font-size="10.8" text-anchor="end" stroke="#000" stroke-width="0.13" textLength="15.92" lengthAdjust="spacingAndGlyphs" >−2</text>
<line x1="144.0" x2="144.0" y1="680.5" y2="683.9" stroke="#222" stroke-width="0.8"/>
<line x1="66.8" x2="70.2" y1="606.5" y2="606.5" stroke="#222" stroke-width="0.8"/>
<text x="144.0" y="695.7" class="s" font-size="10.8" text-anchor="middle" stroke="#000" stroke-width="0.13" >0</text>
<text x="64.2" y="610.4" class="s" font-size="10.8" text-anchor="end" stroke="#000" stroke-width="0.13" >0</text>
<line x1="176.8" x2="176.8" y1="680.5" y2="683.9" stroke="#222" stroke-width="0.8"/>
<line x1="66.8" x2="70.2" y1="573.7" y2="573.7" stroke="#222" stroke-width="0.8"/>
<text x="176.8" y="695.7" class="s" font-size="10.8" text-anchor="middle" stroke="#000" stroke-width="0.13" >2</text>
<text x="64.2" y="577.6" class="s" font-size="10.8" text-anchor="end" stroke="#000" stroke-width="0.13" >2</text>
<line x1="209.6" x2="209.6" y1="680.5" y2="683.9" stroke="#222" stroke-width="0.8"/>
<line x1="66.8" x2="70.2" y1="540.9" y2="540.9" stroke="#222" stroke-width="0.8"/>
<text x="209.6" y="695.7" class="s" font-size="10.8" text-anchor="middle" stroke="#000" stroke-width="0.13" >4</text>
<text x="64.2" y="544.8" class="s" font-size="10.8" text-anchor="end" stroke="#000" stroke-width="0.13" >4</text>
<text x="144.0" y="525.4" class="s" font-size="12.96" text-anchor="middle" stroke="#000" stroke-width="0.156" textLength="92.97" lengthAdjust="spacingAndGlyphs" >Fiber Positions</text>
<text x="144.0" y="706.3" class="s" font-size="10.8" text-anchor="middle" stroke="#000" stroke-width="0.13" textLength="40.60" lengthAdjust="spacingAndGlyphs" >arcsecs</text>
<text x="144.0" y="545.6" class="s" font-size="10.8" text-anchor="middle" fill="#ff0000" stroke="#ff0000" stroke-width="0.13" >N</text>
<text x="80.0" y="610.4" class="s" font-size="10.8" text-anchor="middle" fill="#ff0000" stroke="#ff0000" stroke-width="0.13" >E</text>
<rect x="94.8" y="557.3" width="98.4" height="98.4" fill="none" stroke="#ff0000" stroke-width="1.3"/>
<clipPath id="pc2"><rect x="255.3" y="532.5" width="148" height="148"/></clipPath>
<g clip-path="url(#pc2)">
<rect x="255.3" y="532.5" width="148" height="148" fill="#440154"/>
<rect x="255.3" y="532.5" width="148" height="148" fill="#414487"/>
<g filter="url(#lfb)">
<polygon points="250.0,527.8 273.2,527.8 285.6,546.1 279.8,582.7 266.6,592.7 250.0,584.4" fill="#470d60" opacity="1"/>
<polygon points="274.9,527.8 304.7,527.8 304.7,546.1 298.1,566.1 285.6,582.7 281.5,561.1 285.6,546.1" fill="#33638d" opacity="1"/>
<polygon points="288.1,534.5 301.4,534.5 299.7,549.5 291.4,554.5" fill="#26828e" opacity="0.8"/>
<polygon points="304.7,527.8 349.4,527.8 347.8,554.5 342.8,569.4 322.9,579.4 311.3,572.7 299.7,566.1 304.7,546.1" fill="#3f4788" opacity="1"/>
<polygon points="308.0,556.1 336.2,552.8 339.5,567.8 322.9,576.1 311.3,569.4" fill="#38598c" opacity="0.75"/>
<polygon points="347.8,527.8 371.0,527.8 366.0,546.1 376.0,559.4 342.8,569.4 349.4,547.8" fill="#481a6c" opacity="1"/>
<polygon points="371.0,527.8 394.2,527.8 409.1,557.8 409.1,582.7 387.6,569.4 376.0,559.4 366.0,546.1" fill="#32658e" opacity="1"/>
<polygon points="394.2,527.8 409.1,527.8 409.1,552.8" fill="#481a6c" opacity="1"/>
<polygon points="379.3,577.7 409.1,582.7 409.1,634.3 382.6,630.9 366.0,611.0 359.4,584.4" fill="#2f6c8e" opacity="1"/>
<polygon points="382.6,597.7 409.1,601.0 409.1,627.6 387.6,626.0" fill="#23898e" opacity="0.8"/>
<polygon points="366.0,611.0 382.6,630.9 376.0,647.6 356.1,644.2 356.1,634.3" fill="#33638d" opacity="1"/>
<polygon points="382.6,630.9 409.1,634.3 409.1,662.5 385.9,660.9 376.0,647.6" fill="#443a83" opacity="1"/>
<polygon points="352.8,659.2 376.0,647.6 385.9,660.9 409.1,662.5 409.1,687.5 342.8,687.5 336.2,664.2" fill="#3b528b" opacity="1"/>
<polygon points="250.0,584.4 266.6,592.7 279.8,582.7 298.1,597.7 304.7,611.0 291.4,627.6 266.6,644.2 250.0,647.6" fill="#31688e" opacity="1"/>
<polygon points="255.0,614.3 281.5,601.0 288.1,611.0 259.9,634.3" fill="#2db27d" opacity="0.9"/>
<polygon points="250.0,644.2 266.6,642.6 291.4,627.6 304.7,637.6 316.3,654.2 304.7,660.9 250.0,660.9" fill="#3e4a89" opacity="1"/>
<polygon points="265.7,645.1 285.6,635.9 292.3,646.7 273.2,655.9" fill="#440154" opacity="1"/>
<polygon points="250.0,659.2 304.7,659.2 316.3,654.2 336.2,664.2 342.8,687.5 250.0,687.5" fill="#2b758e" opacity="1"/>
<polygon points="259.9,670.9 299.7,664.2 313.0,674.2 269.9,684.2" fill="#1f9e89" opacity="0.45"/>
</g>
<polygon points="296.4,586.0 311.3,572.7 322.9,579.4 342.8,569.4 376.0,559.4 379.3,577.7 359.4,584.4 368.5,611.8 358.6,635.9 356.1,660.9 336.2,665.0 316.3,655.1 303.0,640.9 289.8,627.6 304.7,611.0 298.1,597.7" fill="#440154" filter="url(#lfb2)"/>
</g>
<path d="M291.5 606.5H321.0M337.4 606.5H366.9M329.2 568.8V598.3M329.2 614.7V644.2" stroke="#ff0000" stroke-width="1.3" fill="none"/>
<rect x="255.3" y="532.5" width="148" height="148" fill="none" stroke="#222" stroke-width="0.9"/>
<line x1="263.6" x2="263.6" y1="680.5" y2="683.9" stroke="#222" stroke-width="0.8"/>
<line x1="251.9" x2="255.3" y1="672.1" y2="672.1" stroke="#222" stroke-width="0.8"/>
<text x="263.6" y="695.7" class="s" font-size="10.8" text-anchor="middle" stroke="#000" stroke-width="0.13" textLength="15.92" lengthAdjust="spacingAndGlyphs" >−4</text>
<text x="249.3" y="676.0" class="s" font-size="10.8" text-anchor="end" stroke="#000" stroke-width="0.13" textLength="15.92" lengthAdjust="spacingAndGlyphs" >−4</text>
<line x1="296.4" x2="296.4" y1="680.5" y2="683.9" stroke="#222" stroke-width="0.8"/>
<line x1="251.9" x2="255.3" y1="639.3" y2="639.3" stroke="#222" stroke-width="0.8"/>
<text x="296.4" y="695.7" class="s" font-size="10.8" text-anchor="middle" stroke="#000" stroke-width="0.13" textLength="15.92" lengthAdjust="spacingAndGlyphs" >−2</text>
<text x="249.3" y="643.2" class="s" font-size="10.8" text-anchor="end" stroke="#000" stroke-width="0.13" textLength="15.92" lengthAdjust="spacingAndGlyphs" >−2</text>
<line x1="329.2" x2="329.2" y1="680.5" y2="683.9" stroke="#222" stroke-width="0.8"/>
<line x1="251.9" x2="255.3" y1="606.5" y2="606.5" stroke="#222" stroke-width="0.8"/>
<text x="329.2" y="695.7" class="s" font-size="10.8" text-anchor="middle" stroke="#000" stroke-width="0.13" >0</text>
<text x="249.3" y="610.4" class="s" font-size="10.8" text-anchor="end" stroke="#000" stroke-width="0.13" >0</text>
<line x1="362.0" x2="362.0" y1="680.5" y2="683.9" stroke="#222" stroke-width="0.8"/>
<line x1="251.9" x2="255.3" y1="573.7" y2="573.7" stroke="#222" stroke-width="0.8"/>
<text x="362.0" y="695.7" class="s" font-size="10.8" text-anchor="middle" stroke="#000" stroke-width="0.13" >2</text>
<text x="249.3" y="577.6" class="s" font-size="10.8" text-anchor="end" stroke="#000" stroke-width="0.13" >2</text>
<line x1="394.8" x2="394.8" y1="680.5" y2="683.9" stroke="#222" stroke-width="0.8"/>
<line x1="251.9" x2="255.3" y1="540.9" y2="540.9" stroke="#222" stroke-width="0.8"/>
<text x="394.8" y="695.7" class="s" font-size="10.8" text-anchor="middle" stroke="#000" stroke-width="0.13" >4</text>
<text x="249.3" y="544.8" class="s" font-size="10.8" text-anchor="end" stroke="#000" stroke-width="0.13" >4</text>
<text x="329.2" y="525.4" class="s" font-size="12.96" text-anchor="middle" stroke="#000" stroke-width="0.156" textLength="82.53" lengthAdjust="spacingAndGlyphs" >Lineflux Map</text>
<text x="329.2" y="706.3" class="s" font-size="10.8" text-anchor="middle" stroke="#000" stroke-width="0.13" textLength="105.51" lengthAdjust="spacingAndGlyphs" >s/b: -5.03 +/- 0.083</text>
<text x="329.2" y="545.6" class="s" font-size="10.8" text-anchor="middle" fill="#ff0000" stroke="#ff0000" stroke-width="0.13" >N</text>
<text x="265.2" y="610.4" class="s" font-size="10.8" text-anchor="middle" fill="#ff0000" stroke="#ff0000" stroke-width="0.13" >E</text>
<rect x="280.0" y="557.3" width="98.4" height="98.4" fill="none" stroke="#ff0000" stroke-width="1.3"/>
<clipPath id="pc3"><rect x="440.3" y="532.5" width="148" height="148"/></clipPath>
<g clip-path="url(#pc3)">
<rect x="440.3" y="532.5" width="148" height="148" fill="#f1f1f1"/>
<rect x="440.3" y="532.5" width="148" height="148" fill="#fff" filter="url(#bgn)" opacity="0.55"/>
<g transform="rotate(7 507.5 612.4)">
<ellipse cx="507.5" cy="612.4" rx="24.0" ry="36.0" fill="url(#galh)"/>
<ellipse cx="507.5" cy="612.4" rx="17.0" ry="27.5" fill="url(#galc)"/>
</g>
<circle cx="572.6" cy="593.1" r="8.2" fill="url(#star)"/>
<ellipse cx="460.3" cy="649.1" rx="6.5" ry="5" fill="url(#faint)"/>
</g>
<path d="M476.7 606.5H506.2M522.6 606.5H552.1M514.4 568.8V598.3M514.4 614.7V644.2" stroke="#ff0000" stroke-width="1.3" fill="none"/>
<ellipse cx="509.8" cy="612.7" rx="24.3" ry="34.6" fill="none" stroke="#ffd700" stroke-width="1.3" transform="rotate(8 509.8 612.7)"/>
<rect x="503.6" y="606.3" width="13.2" height="12.2" fill="none" stroke="#0000ff" stroke-width="1.3"/>
<rect x="440.3" y="532.5" width="148" height="148" fill="none" stroke="#222" stroke-width="0.9"/>
<line x1="448.8" x2="448.8" y1="680.5" y2="683.9" stroke="#222" stroke-width="0.8"/>
<line x1="436.90000000000003" x2="440.3" y1="672.1" y2="672.1" stroke="#222" stroke-width="0.8"/>
<text x="448.8" y="695.7" class="s" font-size="10.8" text-anchor="middle" stroke="#000" stroke-width="0.13" textLength="15.92" lengthAdjust="spacingAndGlyphs" >−4</text>
<text x="434.3" y="676.0" class="s" font-size="10.8" text-anchor="end" stroke="#000" stroke-width="0.13" textLength="15.92" lengthAdjust="spacingAndGlyphs" >−4</text>
<line x1="481.6" x2="481.6" y1="680.5" y2="683.9" stroke="#222" stroke-width="0.8"/>
<line x1="436.90000000000003" x2="440.3" y1="639.3" y2="639.3" stroke="#222" stroke-width="0.8"/>
<text x="481.6" y="695.7" class="s" font-size="10.8" text-anchor="middle" stroke="#000" stroke-width="0.13" textLength="15.92" lengthAdjust="spacingAndGlyphs" >−2</text>
<text x="434.3" y="643.2" class="s" font-size="10.8" text-anchor="end" stroke="#000" stroke-width="0.13" textLength="15.92" lengthAdjust="spacingAndGlyphs" >−2</text>
<line x1="514.4" x2="514.4" y1="680.5" y2="683.9" stroke="#222" stroke-width="0.8"/>
<line x1="436.90000000000003" x2="440.3" y1="606.5" y2="606.5" stroke="#222" stroke-width="0.8"/>
<text x="514.4" y="695.7" class="s" font-size="10.8" text-anchor="middle" stroke="#000" stroke-width="0.13" >0</text>
<text x="434.3" y="610.4" class="s" font-size="10.8" text-anchor="end" stroke="#000" stroke-width="0.13" >0</text>
<line x1="547.2" x2="547.2" y1="680.5" y2="683.9" stroke="#222" stroke-width="0.8"/>
<line x1="436.90000000000003" x2="440.3" y1="573.7" y2="573.7" stroke="#222" stroke-width="0.8"/>
<text x="547.2" y="695.7" class="s" font-size="10.8" text-anchor="middle" stroke="#000" stroke-width="0.13" >2</text>
<text x="434.3" y="577.6" class="s" font-size="10.8" text-anchor="end" stroke="#000" stroke-width="0.13" >2</text>
<line x1="580.0" x2="580.0" y1="680.5" y2="683.9" stroke="#222" stroke-width="0.8"/>
<line x1="436.90000000000003" x2="440.3" y1="540.9" y2="540.9" stroke="#222" stroke-width="0.8"/>
<text x="580.0" y="695.7" class="s" font-size="10.8" text-anchor="middle" stroke="#000" stroke-width="0.13" >4</text>
<text x="434.3" y="544.8" class="s" font-size="10.8" text-anchor="end" stroke="#000" stroke-width="0.13" >4</text>
<text x="514.4" y="525.4" class="s" font-size="12.96" text-anchor="middle" stroke="#000" stroke-width="0.156" textLength="75.44" lengthAdjust="spacingAndGlyphs" >HSC(26.2) r</text>
<text x="514.4" y="706.3" class="s" font-size="10.8" text-anchor="middle" stroke="#000" stroke-width="0.13" textLength="119.98" lengthAdjust="spacingAndGlyphs" >m:19.3  re:1.7"  s:0.5"</text>
<text x="514.4" y="545.6" class="s" font-size="10.8" text-anchor="middle" fill="#ff0000" stroke="#ff0000" stroke-width="0.13" >N</text>
<text x="450.4" y="610.4" class="s" font-size="10.8" text-anchor="middle" fill="#ff0000" stroke="#ff0000" stroke-width="0.13" >E</text>
<rect x="465.2" y="557.3" width="98.4" height="98.4" fill="none" stroke="#ff0000" stroke-width="1.3"/>
</svg>
</body></html>
